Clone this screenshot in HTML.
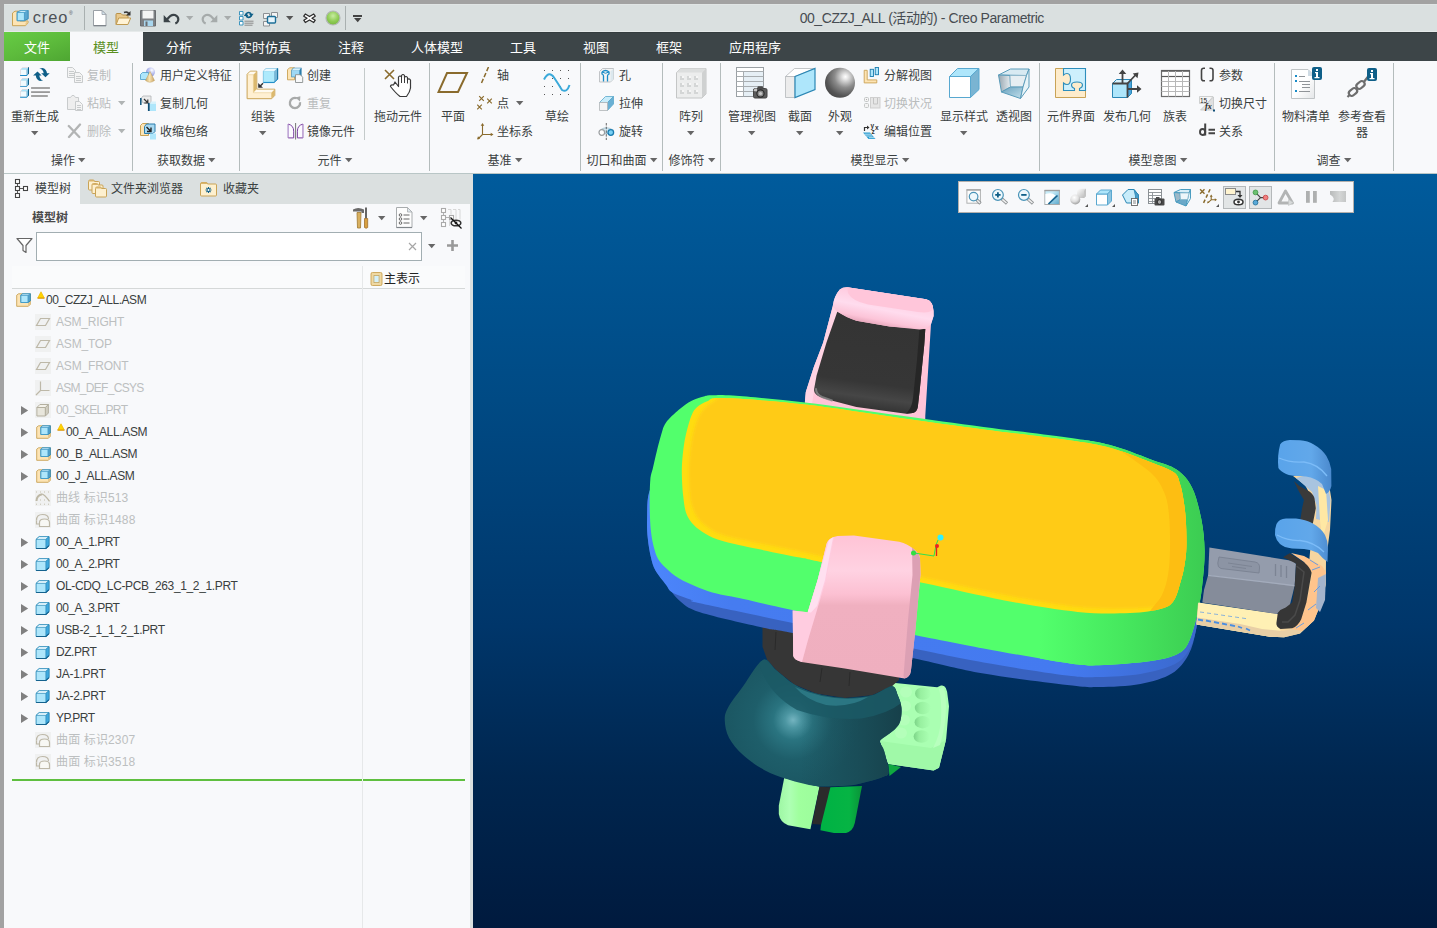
<!DOCTYPE html>
<html lang="zh-CN"><head><meta charset="utf-8"><title>00_CZZJ_ALL (活动的) - Creo Parametric</title>
<style>
html,body{margin:0;padding:0}
body{width:1437px;height:928px;overflow:hidden;background:#a2a2a2;position:relative;font-family:"Liberation Sans","Noto Sans CJK SC",sans-serif;font-size:12px;color:#3a4040}
div,span,svg{position:absolute;box-sizing:border-box}
.t{white-space:nowrap;height:16px;line-height:16px;font-size:12px}
.c{text-align:center}
.dis{color:#b9bcbd}
.tab{font-size:13px;color:#fff;height:20px;line-height:20px;white-space:nowrap}
.sep{width:1px;background:#b4bcbc}
.tr{white-space:nowrap;height:16px;line-height:16px;font-size:12px;letter-spacing:-0.35px;color:#3a4040}
.trd{color:#bcbfc0}
.arr{width:0;height:0;border-left:4px solid transparent;border-right:4px solid transparent;border-top:4px solid #666}
.exp{width:0;height:0;border-top:4.5px solid transparent;border-bottom:4.5px solid transparent;border-left:6px solid #6b6b6b}
</style></head>
<body>
<div style="left:4px;top:4px;width:1433px;height:28px;background:#dae0e0;"></div>
<div style="left:4px;top:4px;width:1433px;height:1px;background:#e0e5e5;"></div>
<div style="left:4px;top:31px;width:1433px;height:1px;background:#e6eaea;"></div>
<svg style="left:12px;top:9.5px" width="62" height="18" viewBox="0 0 62 18"><path d="M0.500 3L3 1.200H8V11H16V13L13.500 15.700H0.500z" fill="#fde4b4" stroke="#c9a356" stroke-width="1" stroke-linejoin="round"/><path d="M13.500 15.700L16 13V11L13.500 13z" fill="#e6c686"/><path d="M5.200 2.300L9 0.500H16.200V8.800L12.400 10.700H5.200z" fill="#5aa6d0" stroke="#2a86b4" stroke-width="0.900" stroke-linejoin="round"/><path d="M5.200 2.300H12.400V10.700H5.200z" fill="#aee6fb" stroke="#3a96c4" stroke-width="0.800"/><path d="M5.200 2.300L9 0.500H16.200L12.400 2.300z" fill="#dcf5fe" stroke="#3a96c4" stroke-width="0.600"/></svg>
<div style="left:32.7px;top:4.7px;height:24px;line-height:24px;font-size:16.4px;color:#4d5257;letter-spacing:0.95px;white-space:nowrap">creo<span style="position:relative;font-size:5px;top:-8px;left:0.5px">®</span></div>
<div class="sep" style="left:84px;top:6px;height:24px;background:#a9b0b0"></div>
<svg style="left:93px;top:10px" width="14" height="17" viewBox="0 0 14 17"><path d="M0.5 0.5h8.5l4 4v11.5h-12.5z" fill="#fff" stroke="#9aa0a6"/><path d="M9 0.5v4h4z" fill="#d4e4ee" stroke="#9aa0a6" stroke-width="0.8"/><path d="M1 15.5h12" stroke="#80868c" stroke-width="1"/></svg>
<svg style="left:115px;top:9.5px" width="17" height="16" viewBox="0 0 17 16"><path d="M1 14.5V4.5q0-1 1-1h4l1.5 1.5H12q1 0 1 1v2" fill="#e8c88c" stroke="#b89048" stroke-width="1"/><path d="M1.2 14.5l2.5-6.5h12l-2.8 6.5z" fill="#fff3d6" stroke="#c09a50" stroke-width="1"/><path d="M9 2.5q3.5-1.5 5 1.5" fill="none" stroke="#333" stroke-width="1.6"/><path d="M15.5 1v4.5h-4.5z" fill="#333"/></svg>
<svg style="left:140px;top:10px" width="16" height="17" viewBox="0 0 16 17"><path d="M0.5 0.5h15v15.5h-15z" fill="#7d8084" stroke="#6a6d70"/><path d="M2.5 0.5h11v8h-11z" fill="#f4f4f4"/><path d="M4 10.5h9v5.5h-9z" fill="#a9d6ee"/><path d="M5.5 11.5h2v4.5h-2z" fill="#6a6d70"/></svg>
<svg style="left:163px;top:13px" width="17" height="12" viewBox="0 0 17 12"><path d="M4 6.500Q8 0.800 12 2Q15.500 3.500 15.300 6.500Q15 9.500 12.300 10.500" fill="none" stroke="#3b4348" stroke-width="2.200"/><path d="M0.700 2V9.200H7.800z" fill="#3b4348"/></svg>
<svg style="left:185.8px;top:16px" width="8" height="5" viewBox="0 0 8 5"><path d="M0 0h7.400l-3.700 4.300z" fill="#a8acac"/></svg>
<svg style="left:201px;top:13px" width="17" height="12" viewBox="0 0 17 12"><path d="M13 6.500Q9 0.800 5 2Q1.500 3.500 1.700 6.500Q2 9.500 4.700 10.500" fill="none" stroke="#a6abab" stroke-width="2.200"/><path d="M16.300 2V9.200H9.200z" fill="#a6abab"/></svg>
<svg style="left:223.8px;top:16px" width="8" height="5" viewBox="0 0 8 5"><path d="M0 0h7.400l-3.700 4.300z" fill="#a8acac"/></svg>
<svg style="left:239px;top:9.5px" width="17" height="17" viewBox="0 0 17 17"><path d="M0.5 1.5h3.5v3.5h-3.5z" fill="#fff" stroke="#2b8cba" stroke-width="0.9"/><path d="M0.5 6.5h3.5v3.5h-3.5z" fill="#fff" stroke="#2b8cba" stroke-width="0.9"/><path d="M0.5 11.5h3.5v3.5h-3.5z" fill="#fff" stroke="#2b8cba" stroke-width="0.9"/><path d="M5.5 11.2h9M5.5 13.2h9M5.5 15.2h8" stroke="#8a8a8a" stroke-width="1"/><path d="M7.300 4A2.600 2.600 0 0 1 12 4" fill="none" stroke="#0f5f88" stroke-width="1.700"/><path d="M10 3.800h4.600l-2.300 3.200z" fill="#0f5f88"/><path d="M12 5.800A2.600 2.600 0 0 1 7.300 5.800" fill="none" stroke="#0f5f88" stroke-width="1.700"/><path d="M4.800 6h4.600l-2.300-3.200z" fill="#0f5f88"/></svg>
<svg style="left:263px;top:11.5px" width="16" height="15" viewBox="0 0 16 15"><path d="M0.5 1.5h6v5h-6zM8.5 0.5h6v5h-6zM0.5 9.5h6v4.5h-6z" fill="#f4f4f4" stroke="#8d9194"/><rect x="4.5" y="4.5" width="8" height="6.5" rx="1" fill="#e6f4fb" stroke="#1d6f98" stroke-width="1.4"/></svg>
<svg style="left:285.8px;top:16.2px" width="8" height="5" viewBox="0 0 8 5"><path d="M0 0h7.400l-3.700 4.300z" fill="#555"/></svg>
<svg style="left:303px;top:13px" width="13" height="11" viewBox="0 0 13 11"><path d="M2.300 1L6.500 3.500L10.700 1L12.200 3.200L9 5.200L12.200 7.200L10.700 9.500L6.500 7L2.300 9.500L0.800 7.200L4 5.200L0.800 3.200z" fill="#fff" stroke="#2c2c2c" stroke-width="1.300" stroke-linejoin="round"/></svg>
<svg style="left:325px;top:10px" width="16" height="16" viewBox="0 0 16 16"><defs><radialGradient id="gb" cx="0.5" cy="0.35" r="0.65"><stop offset="0" stop-color="#c8eca0"/><stop offset="0.6" stop-color="#8fcc55"/><stop offset="1" stop-color="#78b840"/></radialGradient></defs><circle cx="8" cy="8" r="7" fill="url(#gb)" stroke="#b4b8b8" stroke-width="1.2"/></svg>
<div class="sep" style="left:345px;top:6px;height:24px;background:#a9b0b0"></div>
<div style="left:353px;top:15px;width:9px;height:1.5px;background:#444;"></div>
<svg style="left:353.5px;top:18px" width="8" height="5" viewBox="0 0 8 5"><path d="M0 0h7.400l-3.700 4.300z" fill="#444"/></svg>
<div class="t c" style="left:721.8px;top:8px;width:400px;font-size:14px;letter-spacing:-0.43px;color:#474c52;height:20px;line-height:20px">00_CZZJ_ALL (活动的) - Creo Parametric</div>
<div style="left:4px;top:32px;width:1433px;height:29px;background:#3d4548;"></div>
<div style="left:4px;top:32px;width:1433px;height:1px;background:#353d3f;"></div>
<div style="left:4px;top:32px;width:66px;height:29px;background:linear-gradient(160deg,#66cc44 0%,#5dbb3c 50%,#4ea632 100%);"></div>
<div style="left:70px;top:32px;width:73px;height:29px;background:#f8f9fb;"></div>
<div class="tab c" style="left:-13px;top:38px;width:100px;color:#fff">文件</div>
<div class="tab c" style="left:56px;top:38px;width:100px;color:#5a8f1e">模型</div>
<div class="tab c" style="left:129px;top:38px;width:100px;color:#fff">分析</div>
<div class="tab c" style="left:215px;top:38px;width:100px;color:#fff">实时仿真</div>
<div class="tab c" style="left:301px;top:38px;width:100px;color:#fff">注释</div>
<div class="tab c" style="left:387px;top:38px;width:100px;color:#fff">人体模型</div>
<div class="tab c" style="left:473px;top:38px;width:100px;color:#fff">工具</div>
<div class="tab c" style="left:546px;top:38px;width:100px;color:#fff">视图</div>
<div class="tab c" style="left:619px;top:38px;width:100px;color:#fff">框架</div>
<div class="tab c" style="left:705px;top:38px;width:100px;color:#fff">应用程序</div>
<div style="left:4px;top:61px;width:1433px;height:112px;background:#f8f9fb;"></div>
<div style="left:4px;top:173px;width:1433px;height:1px;background:#b9c6c6;"></div>
<div class="sep" style="left:132px;top:63px;height:108px;background:#b4bcbc"></div>
<div class="sep" style="left:239px;top:63px;height:108px;background:#b4bcbc"></div>
<div class="sep" style="left:429px;top:63px;height:108px;background:#b4bcbc"></div>
<div class="sep" style="left:580px;top:63px;height:108px;background:#b4bcbc"></div>
<div class="sep" style="left:662px;top:63px;height:108px;background:#b4bcbc"></div>
<div class="sep" style="left:720px;top:63px;height:108px;background:#b4bcbc"></div>
<div class="sep" style="left:1039px;top:63px;height:108px;background:#b4bcbc"></div>
<div class="sep" style="left:1274px;top:63px;height:108px;background:#b4bcbc"></div>
<div class="sep" style="left:1393px;top:63px;height:108px;background:#b4bcbc"></div>
<div class="sep" style="left:364px;top:68px;height:72px;background:#c4caca"></div>
<svg style="left:18px;top:66px" width="34" height="34" viewBox="0 0 34 34"><g transform="translate(0,0)"><path d="M2.300 3.800L4.300 1.400H10.600V7.500L8.500 9.500H2.300z" fill="#d8ccd0"/><path d="M2.700 3.800L4.500 1.900H10.500L8.700 3.800z" fill="#a8e4fa"/><path d="M2.800 3.800H8.500V9H2.800z" fill="#f0fbff"/><path d="M8.500 3.800L10 2.300V7.500L8.500 9z" fill="#7fc0e0"/><path d="M10 1.300H11V7.700L10 8.500z" fill="#0f5f88"/><path d="M2.100 9H8.500L10 7.800V8.700L8.700 9.900H2.100z" fill="#1a8ac8"/></g><g transform="translate(0,10.9)"><path d="M2.300 3.800L4.300 1.400H10.600V7.500L8.500 9.500H2.300z" fill="#d8ccd0"/><path d="M2.700 3.800L4.500 1.900H10.500L8.700 3.800z" fill="#a8e4fa"/><path d="M2.800 3.800H8.500V9H2.800z" fill="#f0fbff"/><path d="M8.500 3.800L10 2.300V7.500L8.500 9z" fill="#7fc0e0"/><path d="M10 1.300H11V7.700L10 8.500z" fill="#0f5f88"/><path d="M2.100 9H8.500L10 7.800V8.700L8.700 9.900H2.100z" fill="#1a8ac8"/></g><g transform="translate(0,21.8)"><path d="M2.300 3.800L4.300 1.400H10.600V7.500L8.500 9.500H2.300z" fill="#d8ccd0"/><path d="M2.700 3.800L4.500 1.900H10.500L8.700 3.800z" fill="#a8e4fa"/><path d="M2.800 3.800H8.500V9H2.800z" fill="#f0fbff"/><path d="M8.500 3.800L10 2.300V7.500L8.500 9z" fill="#7fc0e0"/><path d="M10 1.300H11V7.700L10 8.500z" fill="#0f5f88"/><path d="M2.100 9H8.500L10 7.800V8.700L8.700 9.900H2.100z" fill="#1a8ac8"/></g><rect x="13.100" y="21.100" width="18.800" height="1.800" fill="#999"/><rect x="13.100" y="25.200" width="18.800" height="1.800" fill="#999"/><rect x="13.100" y="29.100" width="16.700" height="1.800" fill="#999"/><path d="M19.500 5.600L23.600 9.400H21.300Q21.700 13.500 25.200 14.500L22 15.100Q18.200 13.500 17.800 9.400H15.100z" fill="#0f5f88"/><path d="M27.500 11.200L23.200 7.300H25.700Q25.200 3.400 21.300 2.600L24.800 1.900Q28.600 3 29 7.300H31.700z" fill="#0f5f88"/></svg>
<div class="t c" style="left:-25px;top:109px;width:120px;">重新生成</div>
<svg style="left:31px;top:131px" width="8" height="5" viewBox="0 0 8 5"><path d="M0 0h7.400l-3.700 4.300z" fill="#666"/></svg>
<svg style="left:67px;top:67px" width="17" height="17" viewBox="0 0 17 17"><path d="M0.5 0.5h5l3 3v7h-8z" fill="#f4f4f4" stroke="#c8cbcc" stroke-width="1"/><path d="M2 4.5h5" stroke="#c8cbcc" stroke-width="1"/><path d="M2 6.5h5" stroke="#c8cbcc" stroke-width="1"/><path d="M2 8.5h5" stroke="#c8cbcc" stroke-width="1"/><path d="M7.5 5.5h5l3 3v7h-8z" fill="#f4f4f4" stroke="#c8cbcc" stroke-width="1"/><path d="M9 9.5h5" stroke="#c8cbcc" stroke-width="1"/><path d="M9 11.5h5" stroke="#c8cbcc" stroke-width="1"/><path d="M9 13.5h5" stroke="#c8cbcc" stroke-width="1"/></svg>
<div class="t dis" style="left:87px;top:67.5px;">复制</div>
<svg style="left:67px;top:95px" width="17" height="17" viewBox="0 0 17 17"><path d="M0.500 2.500h3l1.500-2h2l1.500 2h3v12h-11z" fill="#eeeeee" stroke="#c8cbcc"/><path d="M8.5 6.5h4l3 3v6h-7z" fill="#f4f4f4" stroke="#c8cbcc" stroke-width="1"/><path d="M10 10.5h4" stroke="#c8cbcc" stroke-width="1"/><path d="M10 12.5h4" stroke="#c8cbcc" stroke-width="1"/><path d="M10 14.5h4" stroke="#c8cbcc" stroke-width="1"/></svg>
<div class="t dis" style="left:87px;top:95.5px;">粘贴</div>
<svg style="left:118px;top:101px" width="8" height="5" viewBox="0 0 8 5"><path d="M0 0h7.400l-3.700 4.300z" fill="#b0b4b4"/></svg>
<svg style="left:67px;top:123px" width="15" height="16" viewBox="0 0 15 16"><path d="M1.800 3l10.500 11M13 1.500l-11 12.500" stroke="#b2b4b4" stroke-width="2.300" stroke-linecap="round"/></svg>
<div class="t dis" style="left:87px;top:123.5px;">删除</div>
<svg style="left:118px;top:129px" width="8" height="5" viewBox="0 0 8 5"><path d="M0 0h7.400l-3.700 4.300z" fill="#b0b4b4"/></svg>
<div class="t" style="left:51px;top:152.5px;">操作</div>
<svg style="left:78px;top:158px" width="8" height="5" viewBox="0 0 8 5"><path d="M0 0h7.400l-3.700 4.300z" fill="#666"/></svg>
<svg style="left:140px;top:67px" width="17" height="17" viewBox="0 0 17 17"><defs><radialGradient id="gu" cx="0.65" cy="0.3" r="0.8"><stop offset="0" stop-color="#fff"/><stop offset="0.4" stop-color="#c4caf4"/><stop offset="1" stop-color="#8088d0"/></radialGradient><linearGradient id="gc" x1="0" y1="0" x2="1" y2="0"><stop offset="0" stop-color="#c8a868"/><stop offset="0.45" stop-color="#f8e4b4"/><stop offset="1" stop-color="#c8a060"/></linearGradient></defs><circle cx="10.500" cy="5" r="4.500" fill="url(#gu)"/><path d="M0.500 7.500l2-2h6v5l-2 2h-6z" fill="#aee6fb" stroke="#4a9cc8" stroke-width="0.800"/><path d="M10 4.500l4.500 9q-4.500 3.500-9 0z" fill="url(#gc)" stroke="#c0a060" stroke-width="0.500"/></svg>
<div class="t" style="left:160px;top:67.5px;">用户定义特征</div>
<svg style="left:140px;top:95px" width="17" height="17" viewBox="0 0 17 17"><path d="M1 3.500l2-2.500h8v7h-8z" fill="#ececec" stroke="#b0b4b6" stroke-width="0.800"/><path d="M0.800 3v7" stroke="#1a5a80" stroke-width="1.600"/><path d="M4 4l3.500 3.500M7.800 4.500v3.500h-3.500" stroke="#333" stroke-width="1.200" fill="none"/><path d="M9.500 8.500h6.500v7.500h-6.500z" fill="#aee6fb"/><path d="M8.800 8v8" stroke="#0f4f78" stroke-width="1.800"/><path d="M9.500 8.500l2-2h4.500v2z" fill="#d8f2fc"/></svg>
<div class="t" style="left:160px;top:95.5px;">复制几何</div>
<svg style="left:140px;top:123px" width="17" height="17" viewBox="0 0 17 17"><path d="M0.500 2.500l2-2h6v12h-8z" fill="#fde4b4" stroke="#c9a356"/><path d="M4.500 3.500l2-2.500h8.500v7.500l-2 2h-8.500z" fill="#a8d8f0" stroke="#2a7cac"/><path d="M6.500 4l4 4M11 4.500v4h-4" stroke="#222" stroke-width="1.400" fill="none"/><path d="M10 10.500h6v6h-6z" fill="#aee6fb"/></svg>
<div class="t" style="left:160px;top:123.5px;">收缩包络</div>
<div class="t" style="left:157px;top:152.5px;">获取数据</div>
<svg style="left:208px;top:158px" width="8" height="5" viewBox="0 0 8 5"><path d="M0 0h7.400l-3.700 4.300z" fill="#666"/></svg>
<svg style="left:246px;top:68px" width="34" height="34" viewBox="0 0 34 34"><path d="M1.100 6.300L4.200 3.200H10.800V21.200H28.800V27.400L25.700 30.700H1.100z" fill="#fff0d2" stroke="#c9a356" stroke-width="1" stroke-linejoin="round"/><path d="M1.500 6.700L4.400 3.700H10.400L7.400 6.700z" fill="#fffaf0"/><path d="M7.400 6.700L10.400 3.700V21.700L7.400 24.700z" fill="#dcb96e"/><path d="M7.400 24.700L10.400 21.700H28.300L25.300 24.700z" fill="#fffaf0"/><path d="M25.300 24.700L28.300 21.700V27.400L25.300 30.300z" fill="#dcb96e"/><path d="M1.500 6.700H7.400V24.700H25.300" fill="none" stroke="#e8cc90" stroke-width="0.600"/><path d="M17.400 3.200L20.300 0.400H31.800V11.100L28.100 14.600H17.400z" fill="#78b8d8" stroke="#3a9acc" stroke-width="0.800" stroke-linejoin="round"/><path d="M17.400 3.200L20.300 0.400H31L28.100 3.200z" fill="#eaf9ff"/><path d="M17.400 3.200H28.100V14.400H17.400z" fill="#aeeafc"/><path d="M31 0.400H31.800V11.100L31 11.900z" fill="#0f6a98"/><path d="M17.400 14.400H28.100L31.400 11.300" fill="none" stroke="#1a8ac8" stroke-width="1"/><path d="M17 15.200L13.500 18.700" stroke="#333" stroke-width="1.400"/><path d="M12.200 15V19.700H17z" fill="#333"/></svg>
<div class="t c" style="left:203px;top:109px;width:120px;">组装</div>
<svg style="left:259px;top:131px" width="8" height="5" viewBox="0 0 8 5"><path d="M0 0h7.400l-3.700 4.300z" fill="#666"/></svg>
<svg style="left:287px;top:67px" width="17" height="17" viewBox="0 0 17 17"><path d="M0.500 2.800l2-2h5v12h-7z" fill="#fde4b4" stroke="#c9a356" stroke-width="0.900"/><path d="M4.300 3l2-2.300h8.300v7.500l-2 2h-8.300z" fill="#2a7cac"/><path d="M4.800 3.200h7.600v6.500h-7.600z" fill="#9ed8f4"/><path d="M4.800 3.200l1.700-1.900h7.400l-1.500 1.900z" fill="#d8f2fc"/><path d="M8.500 7.700h4.700l2.500 2.500v5.300h-7.200z" fill="#f8f9fa" stroke="#8a8e90" stroke-width="0.900"/></svg>
<div class="t" style="left:307px;top:67.5px;">创建</div>
<svg style="left:287px;top:95px" width="16" height="16" viewBox="0 0 16 16"><path d="M13 7.200A5.100 5.100 0 1 1 9.800 3.300" fill="none" stroke="#a8aaaa" stroke-width="2.300"/><path d="M8.300 2.600L13.400 1.300L13 6.400z" fill="#a8aaaa"/></svg>
<div class="t dis" style="left:307px;top:95.5px;">重复</div>
<svg style="left:287px;top:123px" width="17" height="17" viewBox="0 0 17 17"><path d="M1.200 1.100Q6.700 2.400 6.700 8.200V14.900H1.200zM15.900 1.100Q10.400 2.400 10.400 8.200V14.900H15.900z" fill="#fcfaff" stroke="#7a3fa0" stroke-width="1"/><path d="M1.200 1.500V14.500M15.900 1.500V14.500" stroke="#d0c0e4" stroke-width="1"/><path d="M8.600 0V16.500" stroke="#666" stroke-width="0.900"/></svg>
<div class="t" style="left:307px;top:123.5px;">镜像元件</div>
<svg style="left:382px;top:66px" width="34" height="34" viewBox="0 0 34 34"><path d="M3 4l9 9M12 4l-9 9" stroke="#8a6b2d" stroke-width="1.6"/><path d="M13 16l3.500 4.500V11q1.500-2 3 0v-1.500q1.500-2 3 0v2q1.500-2 3 0v2q1.500-1.500 3 0.500v8q-0.500 4-4 8.500h-6.500q-4-3-9.500-10q0-2 3-1.500z" fill="#fff" stroke="#3a3a3a" stroke-width="1.2" stroke-linejoin="round"/><path d="M19.500 11v6M22.500 11.500v5.500M25.500 13.500v4" stroke="#3a3a3a" stroke-width="1" fill="none"/></svg>
<div class="t c" style="left:338px;top:109px;width:120px;">拖动元件</div>
<div class="t" style="left:317.5px;top:152.5px;">元件</div>
<svg style="left:344.5px;top:158px" width="8" height="5" viewBox="0 0 8 5"><path d="M0 0h7.400l-3.700 4.300z" fill="#666"/></svg>
<svg style="left:437px;top:66px" width="34" height="34" viewBox="0 0 34 34"><path d="M10 7h20l-9 19H1.500z" fill="none" stroke="#8a6b2d" stroke-width="2" stroke-linejoin="miter"/></svg>
<div class="t c" style="left:393px;top:109px;width:120px;">平面</div>
<svg style="left:477px;top:67px" width="17" height="17" viewBox="0 0 17 17"><path d="M11.500 0L4.500 16" stroke="#8a6b2d" stroke-width="1.500" stroke-dasharray="4.500 2"/></svg>
<div class="t" style="left:497px;top:67.5px;">轴</div>
<svg style="left:477px;top:95px" width="17" height="17" viewBox="0 0 17 17"><path d="M2.2 1.2l4.6 4.6M6.8 1.2l-4.6 4.6" stroke="#8a6b2d" stroke-width="1.200"/><path d="M10.2 3.7l4.6 4.6M14.8 3.7l-4.6 4.6" stroke="#8a6b2d" stroke-width="1.200"/><path d="M0.2 9.7l4.6 4.6M4.8 9.7l-4.6 4.6" stroke="#8a6b2d" stroke-width="1.200"/></svg>
<div class="t" style="left:497px;top:95.5px;">点</div>
<svg style="left:516px;top:101px" width="8" height="5" viewBox="0 0 8 5"><path d="M0 0h7.400l-3.700 4.300z" fill="#666"/></svg>
<svg style="left:477px;top:123px" width="17" height="17" viewBox="0 0 17 17"><path d="M5.500 2v9.500h9M5.500 11.500l-4.500 4.500" stroke="#8a6b2d" stroke-width="1.100" fill="none"/><path d="M5.500 0l1.800 2.800h-3.600zM16.500 11.500l-2.800 1.800v-3.600zM0 16.500l1-3.200l2.200 2.200z" fill="#8a6b2d"/></svg>
<div class="t" style="left:497px;top:123.5px;">坐标系</div>
<svg style="left:541px;top:66px" width="34" height="34" viewBox="0 0 34 34"><rect x="3" y="4" width="1" height="1" fill="#555"/><rect x="3" y="12" width="1" height="1" fill="#555"/><rect x="3" y="20" width="1" height="1" fill="#555"/><rect x="3" y="28" width="1" height="1" fill="#555"/><rect x="11" y="4" width="1" height="1" fill="#555"/><rect x="11" y="12" width="1" height="1" fill="#555"/><rect x="11" y="20" width="1" height="1" fill="#555"/><rect x="11" y="28" width="1" height="1" fill="#555"/><rect x="19" y="4" width="1" height="1" fill="#555"/><rect x="19" y="12" width="1" height="1" fill="#555"/><rect x="19" y="20" width="1" height="1" fill="#555"/><rect x="19" y="28" width="1" height="1" fill="#555"/><rect x="27" y="4" width="1" height="1" fill="#555"/><rect x="27" y="12" width="1" height="1" fill="#555"/><rect x="27" y="20" width="1" height="1" fill="#555"/><rect x="27" y="28" width="1" height="1" fill="#555"/><path d="M3 13.500Q8 4 13 11.500T21 24Q26 27 28.500 19" fill="none" stroke="#3aa9da" stroke-width="2"/></svg>
<div class="t c" style="left:497px;top:109px;width:120px;">草绘</div>
<div class="t" style="left:487.5px;top:152.5px;">基准</div>
<svg style="left:514.5px;top:158px" width="8" height="5" viewBox="0 0 8 5"><path d="M0 0h7.400l-3.700 4.300z" fill="#666"/></svg>
<svg style="left:598px;top:67px" width="17" height="17" viewBox="0 0 17 17"><path d="M1.500 4.500l3-3h11v10.500l-3 3h-11z" fill="#f4f4f4" stroke="#b4b8ba" stroke-width="0.800"/><path d="M12.500 4.500l3-3v10.500l-3 3z" fill="#dce8ee"/><path d="M4 5q3.500-3 7 0v2q-1.500 0.500-1.500 2v5.500M4 5v2q1.500 0.500 1.500 2v5.500" fill="none" stroke="#1a8cc8" stroke-width="1.300"/><path d="M4 5q3.500 2.500 7 0" fill="none" stroke="#1a8cc8" stroke-width="1"/></svg>
<div class="t" style="left:619px;top:67.5px;">孔</div>
<svg style="left:598px;top:95px" width="17" height="17" viewBox="0 0 17 17"><path d="M1.500 7.500L7.500 1.500h8l-6 6z" fill="#c8ecfa" stroke="#5aa8cc" stroke-width="0.800"/><path d="M9.500 7.500l6-6v7.500l-6 6.500z" fill="#6ab0d4" stroke="#5aa8cc" stroke-width="0.800"/><path d="M1.500 7.500h8v8h-8z" fill="#f4f4f4" stroke="#b0b4b6" stroke-width="0.800"/></svg>
<div class="t" style="left:619px;top:95.5px;">拉伸</div>
<svg style="left:598px;top:123px" width="17" height="17" viewBox="0 0 17 17"><path d="M3 6.500q5.500-3.500 11 0v4H3z" fill="#d4eaf4" stroke="#98b8c8" stroke-width="0.800"/><circle cx="3.800" cy="9.500" r="2.800" fill="#fff" stroke="#9a9ea0" stroke-width="1.200"/><circle cx="12.800" cy="9.500" r="2.800" fill="#7ad0f4" stroke="#1a7cb0" stroke-width="1.300"/><path d="M8.300 0v17" stroke="#444" stroke-width="0.800" stroke-dasharray="2.500 1.200"/></svg>
<div class="t" style="left:619px;top:123.5px;">旋转</div>
<div class="t" style="left:586.5px;top:152.5px;">切口和曲面</div>
<svg style="left:649.5px;top:158px" width="8" height="5" viewBox="0 0 8 5"><path d="M0 0h7.400l-3.700 4.300z" fill="#666"/></svg>
<svg style="left:675px;top:66px" width="34" height="34" viewBox="0 0 34 34"><path d="M1.500 6.500L5.500 2.500h25.500v25.500l-4 4h-25.500z" fill="#eceded" stroke="#c4c6c6"/><path d="M1.500 6.500L5.500 2.500h25.500l-4 4z" fill="#dcdede"/><path d="M27 6.500l4-4v25.500l-4 4z" fill="#cfd1d1"/><rect x="5" y="10" width="4" height="4" fill="#d4d6d6"/><rect x="7" y="10" width="2" height="2" fill="#f6f6f6"/><rect x="5" y="17" width="4" height="4" fill="#d4d6d6"/><rect x="7" y="17" width="2" height="2" fill="#f6f6f6"/><rect x="5" y="24" width="4" height="4" fill="#d4d6d6"/><rect x="7" y="24" width="2" height="2" fill="#f6f6f6"/><rect x="12" y="10" width="4" height="4" fill="#d4d6d6"/><rect x="14" y="10" width="2" height="2" fill="#f6f6f6"/><rect x="12" y="17" width="4" height="4" fill="#d4d6d6"/><rect x="14" y="17" width="2" height="2" fill="#f6f6f6"/><rect x="12" y="24" width="4" height="4" fill="#d4d6d6"/><rect x="14" y="24" width="2" height="2" fill="#f6f6f6"/><rect x="19" y="10" width="4" height="4" fill="#d4d6d6"/><rect x="21" y="10" width="2" height="2" fill="#f6f6f6"/><rect x="19" y="17" width="4" height="4" fill="#d4d6d6"/><rect x="21" y="17" width="2" height="2" fill="#f6f6f6"/><rect x="19" y="24" width="4" height="4" fill="#d4d6d6"/><rect x="21" y="24" width="2" height="2" fill="#f6f6f6"/></svg>
<div class="t c" style="left:631px;top:109px;width:120px;">阵列</div>
<svg style="left:687px;top:131px" width="8" height="5" viewBox="0 0 8 5"><path d="M0 0h7.400l-3.700 4.300z" fill="#666"/></svg>
<div class="t" style="left:668.5px;top:152.5px;">修饰符</div>
<svg style="left:707.5px;top:158px" width="8" height="5" viewBox="0 0 8 5"><path d="M0 0h7.400l-3.700 4.300z" fill="#666"/></svg>
<svg style="left:735px;top:66px" width="34" height="34" viewBox="0 0 34 34"><rect x="1.500" y="1.500" width="27" height="29" fill="#fff" stroke="#9aa0a4"/><rect x="9" y="6" width="19" height="24" fill="#e6eff5"/><path d="M1.500 5.5h27" stroke="#a8adb0"/><path d="M1.500 10.5h27" stroke="#a8adb0"/><path d="M1.500 15.5h27" stroke="#a8adb0"/><path d="M1.500 20.5h27" stroke="#a8adb0"/><path d="M1.500 25.5h27" stroke="#a8adb0"/><path d="M8.500 5.500v25" stroke="#a8adb0"/><rect x="18.500" y="22.500" width="13.500" height="9.500" rx="1.500" fill="#5c5c5c" stroke="#444"/><path d="M18.500 25l1-2.500h2.500v3z" fill="#c4c4c4"/><rect x="22.500" y="20.300" width="5.500" height="3" rx="1" fill="#4a4a4a"/><circle cx="25.500" cy="27.500" r="3.600" fill="#8c8c8c" stroke="#2c2c2c" stroke-width="1.200"/><circle cx="25.500" cy="27.500" r="1.600" fill="#c8c8c8"/></svg>
<div class="t c" style="left:692px;top:109px;width:120px;">管理视图</div>
<svg style="left:748px;top:131px" width="8" height="5" viewBox="0 0 8 5"><path d="M0 0h7.400l-3.700 4.300z" fill="#666"/></svg>
<svg style="left:784px;top:66px" width="34" height="34" viewBox="0 0 34 34"><path d="M1.500 10.500L10.500 2.500h20.500l-20 8z" fill="#fff" stroke="#b4b8ba" stroke-width="0.8"/><path d="M1.500 10.500h9.500v21h-9.500z" fill="#ececec" stroke="#b4b8ba" stroke-width="0.8"/><path d="M11 10.500L31 2.500v21L11 31.500z" fill="#aee6fb" stroke="#2a86b4" stroke-width="1.2"/></svg>
<div class="t c" style="left:740px;top:109px;width:120px;">截面</div>
<svg style="left:796px;top:131px" width="8" height="5" viewBox="0 0 8 5"><path d="M0 0h7.400l-3.700 4.300z" fill="#666"/></svg>
<svg style="left:824px;top:66px" width="34" height="34" viewBox="0 0 34 34"><defs><radialGradient id="gs" cx="0.68" cy="0.3" r="0.8"><stop offset="0" stop-color="#fff"/><stop offset="0.12" stop-color="#e4e4e4"/><stop offset="0.45" stop-color="#8c8c8c"/><stop offset="0.8" stop-color="#555"/><stop offset="1" stop-color="#484848"/></radialGradient></defs><circle cx="16" cy="16.800" r="15" fill="url(#gs)"/></svg>
<div class="t c" style="left:780px;top:109px;width:120px;">外观</div>
<svg style="left:836px;top:131px" width="8" height="5" viewBox="0 0 8 5"><path d="M0 0h7.400l-3.700 4.300z" fill="#666"/></svg>
<svg style="left:863px;top:67px" width="17" height="17" viewBox="0 0 17 17"><path d="M1.200 3.300h3v9.600h9.600v3h-12.600z" fill="#fde4b4" stroke="#c9a356" stroke-width="0.900"/><rect x="7.200" y="2.300" width="3.300" height="7.200" fill="#aee6fb" stroke="#1a7cb0" stroke-width="0.900"/><rect x="12.200" y="0.500" width="3.300" height="7.200" fill="#aee6fb" stroke="#1a7cb0" stroke-width="0.900"/></svg>
<div class="t" style="left:884px;top:67.5px;">分解视图</div>
<svg style="left:863.8px;top:97px" width="17" height="12" viewBox="0 0 17 12"><rect x="0.500" y="0.500" width="4" height="4" rx="1" fill="#f4f4f4" stroke="#c4c6c6"/><rect x="0.500" y="6.500" width="4" height="4" rx="1" fill="#f4f4f4" stroke="#c4c6c6"/><rect x="2" y="2" width="1" height="1" fill="#b0b0b0"/><rect x="6.500" y="0.500" width="9.500" height="10.500" fill="#e6e6e6" stroke="#cfcfcf"/><path d="M9.500 1v6h4v-6" fill="none" stroke="#c4c4c4"/></svg>
<div class="t dis" style="left:884px;top:95.5px;">切换状况</div>
<svg style="left:863px;top:123px" width="17" height="17" viewBox="0 0 17 17"><path d="M0 9.500h7l5.500 6.500h-7z" fill="#2a9cd0"/><path d="M1.500 11.200h6.500M3 13h6.500M6 14.700h6" stroke="#d8f0fa" stroke-width="0.800"/><path d="M1.500 8v-3.500h3" fill="none" stroke="#333" stroke-width="1.200"/><path d="M4 2.500l2.500 2l-2.500 2z" fill="#333"/><text x="7.500" y="5" font-family="Liberation Sans,sans-serif" font-size="6.500" font-weight="bold" fill="#333">y</text><text x="12" y="7" font-family="Liberation Sans,sans-serif" font-size="6.500" font-weight="bold" fill="#333">x</text><text x="8.500" y="10.500" font-family="Liberation Sans,sans-serif" font-size="6.500" font-weight="bold" fill="#333">z</text></svg>
<div class="t" style="left:884px;top:123.5px;">编辑位置</div>
<svg style="left:948px;top:66px" width="34" height="34" viewBox="0 0 34 34"><path d="M1.500 10.500h21v21h-21z" fill="#fff" stroke="#58a8d0"/><path d="M1.500 10.500L9.500 2.500h21.500l-8.500 8z" fill="#aee6fb" stroke="#58a8d0"/><path d="M22.500 10.500L31 2.500v21l-8.500 8z" fill="#7ab4d2" stroke="#58a8d0"/></svg>
<div class="t c" style="left:904px;top:109px;width:120px;">显示样式</div>
<svg style="left:960px;top:131px" width="8" height="5" viewBox="0 0 8 5"><path d="M0 0h7.400l-3.700 4.300z" fill="#666"/></svg>
<svg style="left:997px;top:66px" width="34" height="34" viewBox="0 0 34 34"><defs><linearGradient id="gp1" x1="0" y1="0" x2="1" y2="0"><stop offset="0" stop-color="#98a6b0"/><stop offset="1" stop-color="#e4ecf0"/></linearGradient><linearGradient id="gp2" x1="0" y1="0" x2="1" y2="1"><stop offset="0" stop-color="#6aa2be"/><stop offset="1" stop-color="#c4e0ec"/></linearGradient></defs><path d="M1.500 9L13.500 3h18.500L29.500 9.500z" fill="#d8eaf2" stroke="#5a9cba"/><path d="M1.500 9l11.500 0.500l0.500 11.500L4.500 26z" fill="url(#gp1)" stroke="#5a9cba"/><path d="M13 9.500h16.500L26 21H13.500z" fill="#e6eef2" stroke="#8ab4c8" stroke-width="0.8"/><path d="M4.500 26l9-5H26l-2.500 11.500z" fill="url(#gp2)" stroke="#5a9cba"/><path d="M29.500 9.500L32 3v18l-8.500 11.500L26 21z" fill="#e8f4f8" stroke="#5a9cba"/></svg>
<div class="t c" style="left:954px;top:109px;width:120px;">透视图</div>
<div class="t" style="left:850.5px;top:152.5px;">模型显示</div>
<svg style="left:901.5px;top:158px" width="8" height="5" viewBox="0 0 8 5"><path d="M0 0h7.400l-3.700 4.300z" fill="#666"/></svg>
<svg style="left:1054px;top:66px" width="34" height="34" viewBox="0 0 34 34"><path d="M1.500 2.500h30v29h-30z" fill="#feeccb" stroke="#c9a356"/><path d="M9.500 2.500h22v22h-6v-2q3-1 3-3.500q0-3-5.500-3t-5.500 3q0 2.500 3 3.500v2h-11v-7.500q1.500 1.500 3.500 1.500q3.500 0 3.500-5.500t-3.500-5.500q-2 0-3.500 1.500z" fill="#cdf0fd" stroke="#2d8ebc" stroke-width="1.1"/></svg>
<div class="t c" style="left:1011px;top:109px;width:120px;">元件界面</div>
<svg style="left:1110.7px;top:66.7px" width="34" height="34" viewBox="0 0 34 34"><path d="M1.500 16.500h15v14h-15z" fill="#aee6fb" stroke="#2a86b4"/><path d="M1.500 16.500L5.500 12.500h15l-4 4z" fill="#d6f2fc" stroke="#2a86b4"/><path d="M16.500 16.500l4-4v14l-4 4z" fill="#4aa4dc" stroke="#2a86b4"/><path d="M11.500 16.500V6M16.500 16.500L25 7.500M16.500 22h11" stroke="#444" stroke-width="1.800" fill="none"/><path d="M1.500 16.500h15v14" stroke="#444" stroke-width="1.800" fill="none"/><path d="M11.500 2.500l3.800 4.500h-7.600zM27.500 5.500l-1 5.800l-4.800-4.800zM30.500 22l-4.500 3.800v-7.600z" fill="#444"/></svg>
<div class="t c" style="left:1067px;top:109px;width:120px;">发布几何</div>
<svg style="left:1160px;top:69px" width="32" height="30" viewBox="0 0 32 30"><rect x="1.500" y="1.500" width="28" height="26" fill="#fff" stroke="#6c6c6c" stroke-width="1.200"/><path d="M1.500 2h28" stroke="#5a5a5a" stroke-width="1.500"/><path d="M1.500 7.500h28" stroke="#5a5a5a" stroke-width="1.200"/><path d="M1.500 12.5h28" stroke="#b8b8b8"/><path d="M1.500 17.5h28" stroke="#b8b8b8"/><path d="M1.500 22.5h28" stroke="#b8b8b8"/><path d="M8.5 2v25.500" stroke="#b8b8b8"/><path d="M15.5 2v25.500" stroke="#b8b8b8"/><path d="M22.5 2v25.500" stroke="#b8b8b8"/></svg>
<div class="t c" style="left:1115px;top:109px;width:120px;">族表</div>
<svg style="left:1199px;top:67px" width="16" height="16" viewBox="0 0 16 16"><path d="M6 1.300H4.800Q2.500 1.300 2.500 3.500V11.500Q2.500 13.800 4.800 13.800H6M10.500 1.300H11.700Q14 1.300 14 3.500V11.500Q14 13.800 11.700 13.800H10.500" fill="none" stroke="#444" stroke-width="1.600"/></svg>
<div class="t" style="left:1219px;top:67.5px;">参数</div>
<svg style="left:1199px;top:95px" width="17" height="17" viewBox="0 0 17 17"><path d="M0.500 1.500h13.500L8 8.500H0.500z" fill="#f6f6f6" stroke="#c4c6c6" stroke-width="0.800"/><path d="M14.500 2v13h-13z" fill="#e0e0e0" stroke="#c4c6c6" stroke-width="0.800"/><text x="1" y="7.500" font-family="Liberation Sans,sans-serif" font-size="6.500" fill="#222">15</text><text x="6" y="13.500" font-family="Liberation Serif,serif" font-size="8" font-style="italic" font-weight="bold" fill="#222">fx</text><rect x="14" y="14.500" width="2" height="2" fill="#0f4f78"/></svg>
<div class="t" style="left:1219px;top:95.5px;">切换尺寸</div>
<svg style="left:1199px;top:123px" width="17" height="14" viewBox="0 0 17 14"><path d="M6.200 0.500v12" stroke="#444" stroke-width="2"/><path d="M6.200 9q0 3-2.600 3t-2.600-3t2.600-3t2.600 3z" fill="none" stroke="#444" stroke-width="1.900"/><path d="M9.500 6.700h6.500M9.500 10.300h6.500" stroke="#444" stroke-width="2.100"/></svg>
<div class="t" style="left:1219px;top:123.5px;">关系</div>
<div class="t" style="left:1128.5px;top:152.5px;">模型意图</div>
<svg style="left:1179.5px;top:158px" width="8" height="5" viewBox="0 0 8 5"><path d="M0 0h7.400l-3.700 4.300z" fill="#666"/></svg>
<svg style="left:1290px;top:66px" width="34" height="34" viewBox="0 0 34 34"><defs><linearGradient id="gd" x1="0" y1="0" x2="1" y2="1"><stop offset="0.5" stop-color="#fff"/><stop offset="1" stop-color="#e4e6e8"/></linearGradient></defs><path d="M1.500 3.500h16.500l6.500 6.500v22.500h-23z" fill="url(#gd)" stroke="#c0c4c6"/><path d="M18 3.500v6.500h6.500z" fill="#cfdbe4"/><rect x="5" y="9" width="2" height="2" fill="#1a8cc8"/><rect x="5" y="14" width="2" height="2" fill="#1a8cc8"/><rect x="5" y="24" width="2" height="2" fill="#1a8cc8"/><path d="M9 10.500h6M9 15.500h11M12 18.500h8M12 21.500h8M9 25.500h11" stroke="#909498" stroke-width="1"/><rect x="22" y="1" width="10" height="13" rx="2" fill="#0f5f88"/><rect x="26" y="3" width="2" height="2" fill="#fff"/><path d="M25 6h3v5h1.500v1.300h-5v-1.300h1.500v-3.700h-1z" fill="#fff"/></svg>
<div class="t c" style="left:1246px;top:109px;width:120px;">物料清单</div>
<svg style="left:1346px;top:66px" width="34" height="34" viewBox="0 0 34 34"><g fill="none" stroke="#6e6e6e" stroke-width="2.200"><rect x="-4.500" y="-2.800" width="9" height="5.600" rx="2.800" transform="translate(7,26) rotate(-40)"/><rect x="-4.500" y="-2.800" width="9" height="5.600" rx="2.800" transform="translate(14.500,19) rotate(-40)"/><path d="M10 23.500l2-2M17.500 16.500l5-6.500M1.500 31l2.500-2.500"/></g><rect x="21" y="2" width="10" height="13" rx="2" fill="#0f5f88"/><rect x="25" y="4" width="2" height="2" fill="#fff"/><path d="M24 7h3v5h1.500v1.300h-5v-1.300h1.500v-3.700h-1z" fill="#fff"/></svg>
<div class="t c" style="left:1302px;top:109px;width:120px;">参考查看</div>
<div class="t c" style="left:1302px;top:125px;width:120px;">器</div>
<div class="t" style="left:1316.5px;top:152.5px;">调查</div>
<svg style="left:1343.5px;top:158px" width="8" height="5" viewBox="0 0 8 5"><path d="M0 0h7.400l-3.700 4.300z" fill="#666"/></svg>
<div style="left:4px;top:174px;width:469px;height:754px;background:#dbe0e0;"></div>
<div style="left:4px;top:174px;width:76px;height:30px;background:#f8f9fb;"></div>
<div style="left:4px;top:204px;width:466px;height:724px;background:#f8f9fb;"></div>
<svg style="left:14px;top:178px" width="16" height="20" viewBox="0 0 16 20"><g fill="#fff" stroke="#444" stroke-width="1.100"><rect x="1.500" y="1.500" width="4" height="4"/><rect x="1.500" y="8.500" width="4" height="4"/><rect x="1.500" y="15.500" width="4" height="4"/><rect x="9.500" y="8.500" width="4" height="4"/></g><path d="M3.500 5.500v3M3.500 12.500v3M5.500 10.500h4" stroke="#444" stroke-width="0.900"/></svg>
<div class="t" style="left:35px;top:180.5px;">模型树</div>
<svg style="left:88px;top:179px" width="20" height="20" viewBox="0 0 20 20"><path d="M0.5 2.5q0-1.500 1.500-1.500h3q1.500 0 1.500 1.500h4q1 0 1 1v6.5q0 1-1 1h-9q-1 0-1-1z" fill="#fdf0cf" stroke="#c9a356" stroke-width="1"/><path d="M0.5 2.5q0-1.500 1.500-1.500h3q1.500 0 1.500 1.500z" fill="#d9b46a"/><path d="M4 6q0-1.500 1.500-1.500h3q1.500 0 1.500 1.500h4q1 0 1 1v6.5q0 1-1 1h-9q-1 0-1-1z" fill="#fdf0cf" stroke="#c9a356" stroke-width="1"/><path d="M4 6q0-1.500 1.500-1.500h3q1.500 0 1.500 1.500z" fill="#d9b46a"/><path d="M7.5 9.5q0-1.500 1.500-1.500h3q1.500 0 1.500 1.500h4q1 0 1 1v6.5q0 1-1 1h-9q-1 0-1-1z" fill="#fdf0cf" stroke="#c9a356" stroke-width="1"/><path d="M7.5 9.5q0-1.500 1.500-1.500h3q1.500 0 1.500 1.500z" fill="#d9b46a"/></svg>
<div class="t" style="left:111px;top:180.5px;">文件夹浏览器</div>
<svg style="left:200px;top:181px" width="18" height="16" viewBox="0 0 18 16"><path d="M0.500 3q0-1.500 1.500-1.500h4q1.500 0 1.500 1.500h8q1 0 1 1v10q0 1-1 1h-14q-1 0-1-1z" fill="#fdf0cf" stroke="#c9a356"/><path d="M0.500 3q0-1.500 1.500-1.500h4q1.500 0 1.500 1.500z" fill="#d9b46a"/><path d="M8.500 6v6M5.500 9h6M6.400 6.900l4.200 4.200M10.600 6.900l-4.200 4.200" stroke="#0f5f88" stroke-width="1.100"/><circle cx="8.500" cy="9" r="1" fill="#fff"/></svg>
<div class="t" style="left:223px;top:180.5px;">收藏夹</div>
<div class="t" style="left:32px;top:209.5px;font-weight:bold;color:#4a4a4a">模型树</div>
<svg style="left:351px;top:206px" width="20" height="24" viewBox="0 0 20 24"><path d="M2 3.500q5-3 11 0v3.500h-2.500v-1.500h-8.500z" fill="#6a6a6a"/><path d="M6 6.500h4l-0.500 15.500h-3z" fill="#d8b060" stroke="#a07830" stroke-width="0.800"/><path d="M15 1.500v11" stroke="#555" stroke-width="1.800"/><path d="M13.500 12.500h3.200v9q-1.600 1.500-3.200 0z" fill="#d8a040" stroke="#a07030" stroke-width="0.800"/></svg>
<svg style="left:378px;top:216px" width="8" height="5" viewBox="0 0 8 5"><path d="M0 0h7.400l-3.700 4.300z" fill="#666"/></svg>
<svg style="left:396px;top:207px" width="18" height="22" viewBox="0 0 18 22"><path d="M0.500 0.500h11l4.500 4.500v15.500h-15.500z" fill="#fdfdfd" stroke="#a8acae"/><path d="M11.500 0.500v4.500h4.500z" fill="#dfe8ee" stroke="#a8acae" stroke-width="0.800"/><path d="M0.500 20.500h15.500" stroke="#80868a" stroke-width="1.200"/><g fill="none" stroke="#666" stroke-width="1"><circle cx="4.500" cy="8" r="1.300"/><circle cx="4.500" cy="12" r="1.300"/><circle cx="4.500" cy="16" r="1.300"/><path d="M7.500 8h6M7.500 12h6M7.500 16h6"/></g></svg>
<svg style="left:420px;top:216px" width="8" height="5" viewBox="0 0 8 5"><path d="M0 0h7.400l-3.700 4.300z" fill="#666"/></svg>
<svg style="left:440px;top:207px" width="24" height="24" viewBox="0 0 24 24"><g fill="#fff" stroke="#aaa" stroke-width="1.100"><rect x="1.500" y="1.500" width="4" height="4"/><rect x="1.500" y="8.500" width="4" height="4"/><rect x="1.500" y="15.500" width="4" height="4"/><rect x="9.500" y="8.500" width="4" height="4"/></g><path d="M3.500 5.500v3M3.500 12.500v3M5.500 10.500h4" stroke="#aaa" stroke-width="0.900"/><path d="M8 2.500h3v5M13 2.500h3v14M18 2.500h2v10M9.500 13v6" stroke="#d4d4d4" stroke-width="0.900" fill="none"/><ellipse cx="16" cy="16" rx="4.800" ry="2.800" fill="#fff" stroke="#333" stroke-width="1.600"/><circle cx="16" cy="16" r="1.400" fill="#333"/><path d="M10.500 10.500l11 11" stroke="#111" stroke-width="1.200"/></svg>
<svg style="left:16px;top:237px" width="17" height="17" viewBox="0 0 17 17"><path d="M1 1.500h15l-6 7v7l-3-2v-5z" fill="#fff" stroke="#666" stroke-width="1.200" stroke-linejoin="round"/></svg>
<div style="left:36px;top:232px;width:386px;height:29px;background:#fff;border:1px solid #a2aeb2"></div>
<svg style="left:407.5px;top:242px" width="9" height="9" viewBox="0 0 9 9"><path d="M1 1L8 8M8 1L1 8" stroke="#a6a6a6" stroke-width="1.2" fill="none"/></svg>
<svg style="left:427.5px;top:244px" width="8" height="5" viewBox="0 0 8 5"><path d="M0 0h7.400l-3.700 4.300z" fill="#666"/></svg>
<svg style="left:446px;top:239px" width="13" height="13" viewBox="0 0 13 13"><path d="M6.5 1V12M1 6.5H12" stroke="#999" stroke-width="2.6" fill="none"/></svg>
<div style="left:12px;top:266px;width:453px;height:22px;background:#fafbfc;"></div>
<div style="left:12px;top:288px;width:453px;height:1px;background:#d5d8d8;"></div>
<div style="left:362px;top:266px;width:1px;height:662px;background:#e6e8e9;"></div>
<svg style="left:369.5px;top:272px" width="14" height="14" viewBox="0 0 14 14"><rect x="2.200" y="1.700" width="8.600" height="10.600" fill="#d4f0fa" stroke="#f0d8a0" stroke-width="2.400"/><rect x="1" y="0.500" width="11" height="13" rx="1.500" fill="none" stroke="#c9a356" stroke-width="0.900"/><rect x="3.900" y="3.400" width="5.200" height="7.200" fill="none" stroke="#c9a356" stroke-width="0.800"/></svg>
<div class="t" style="left:384px;top:271px;color:#222">主表示</div>
<svg style="left:16px;top:292.2px" width="16" height="16" viewBox="0 0 16 16"><path d="M0.700 3.200L2.500 1.800H14.300V12.500L12 14.300H0.700z" fill="#fde4b4" stroke="#c9a356" stroke-width="0.900" stroke-linejoin="round"/><path d="M12 14.300L14.300 12.500V9.500L12 11z" fill="#e8c88c"/><path d="M4.900 3.200L6.700 1.800H14.300V9L12 10.500H4.900z" fill="#5aa4cc" stroke="#2a86b4" stroke-width="0.900" stroke-linejoin="round"/><path d="M4.900 3.200H12V10.500H4.900z" fill="#aee6fb" stroke="#3a96c4" stroke-width="0.800"/><path d="M4.900 3.200L6.700 1.800H14.300L12 3.200z" fill="#d4f2fd" stroke="#3a96c4" stroke-width="0.600"/></svg>
<svg style="left:37px;top:290.5px" width="9" height="9" viewBox="0 0 9 9"><path d="M4 0.800l3.300 6.200h-6.600z" fill="#ffd600" stroke="#f0b400" stroke-width="0.700" stroke-linejoin="round"/><path d="M0.500 7.200h7" stroke="#d88c00" stroke-width="0.900"/></svg>
<div class="tr" style="left:46px;top:291.5px;letter-spacing:-0.43px">00_CZZJ_ALL.ASM</div>
<svg style="left:35px;top:313.5px" width="16" height="16" viewBox="0 0 16 16"><rect x="0" y="0" width="16" height="16" fill="#f0f1f1"/><path d="M5.500 4.500h9l-4 7h-9z" fill="none" stroke="#bdb8a8" stroke-width="1.200"/></svg>
<div class="tr trd" style="left:56px;top:313.5px;letter-spacing:-0.21px">ASM_RIGHT</div>
<svg style="left:35px;top:335.5px" width="16" height="16" viewBox="0 0 16 16"><rect x="0" y="0" width="16" height="16" fill="#f0f1f1"/><path d="M5.500 4.500h9l-4 7h-9z" fill="none" stroke="#bdb8a8" stroke-width="1.200"/></svg>
<div class="tr trd" style="left:56px;top:335.5px;letter-spacing:-0.19px">ASM_TOP</div>
<svg style="left:35px;top:357.5px" width="16" height="16" viewBox="0 0 16 16"><rect x="0" y="0" width="16" height="16" fill="#f0f1f1"/><path d="M5.500 4.500h9l-4 7h-9z" fill="none" stroke="#bdb8a8" stroke-width="1.200"/></svg>
<div class="tr trd" style="left:56px;top:357.5px;letter-spacing:-0.17px">ASM_FRONT</div>
<svg style="left:35px;top:379.5px" width="16" height="16" viewBox="0 0 16 16"><rect x="0" y="0" width="16" height="16" fill="#f0f1f1"/><path d="M5.500 1.500v9h9M5.500 10.500l-4.500 4.500" fill="none" stroke="#bdb8a8" stroke-width="1.200"/></svg>
<div class="tr trd" style="left:56px;top:379.5px;letter-spacing:-0.71px">ASM_DEF_CSYS</div>
<svg style="left:21px;top:406px" width="8" height="9" viewBox="0 0 8 9"><path d="M0 0L7.200 4.500L0 9z" fill="#808080"/></svg>
<svg style="left:35px;top:401.5px" width="16" height="16" viewBox="0 0 16 16"><rect x="0" y="0" width="16" height="16" fill="#f0f1f1"/><path d="M1.9 5.5h8.5v8.5h-8.5z" fill="#e8e6dc" stroke="#b4b0a0" stroke-width="1" stroke-linejoin="round"/><path d="M1.9 5.5l3 -3h8.5l-3 3z" fill="#f4f2ea" stroke="#b4b0a0" stroke-width="1" stroke-linejoin="round"/><path d="M10.4 5.5l3 -3v8.5l-3 3z" fill="#d0cdc0" stroke="#b4b0a0" stroke-width="1" stroke-linejoin="round"/></svg>
<div class="tr trd" style="left:56px;top:401.5px;letter-spacing:-0.58px">00_SKEL.PRT</div>
<svg style="left:21px;top:428px" width="8" height="9" viewBox="0 0 8 9"><path d="M0 0L7.200 4.500L0 9z" fill="#808080"/></svg>
<svg style="left:35.5px;top:424.2px" width="16" height="16" viewBox="0 0 16 16"><path d="M0.700 3.200L2.500 1.800H14.300V12.500L12 14.300H0.700z" fill="#fde4b4" stroke="#c9a356" stroke-width="0.900" stroke-linejoin="round"/><path d="M12 14.300L14.300 12.500V9.500L12 11z" fill="#e8c88c"/><path d="M4.900 3.200L6.700 1.800H14.300V9L12 10.500H4.900z" fill="#5aa4cc" stroke="#2a86b4" stroke-width="0.900" stroke-linejoin="round"/><path d="M4.900 3.200H12V10.500H4.900z" fill="#aee6fb" stroke="#3a96c4" stroke-width="0.800"/><path d="M4.900 3.200L6.700 1.800H14.300L12 3.200z" fill="#d4f2fd" stroke="#3a96c4" stroke-width="0.600"/></svg>
<svg style="left:56.5px;top:422.5px" width="9" height="9" viewBox="0 0 9 9"><path d="M4 0.800l3.300 6.200h-6.600z" fill="#ffd600" stroke="#f0b400" stroke-width="0.700" stroke-linejoin="round"/><path d="M0.500 7.200h7" stroke="#d88c00" stroke-width="0.900"/></svg>
<div class="tr" style="left:66px;top:423.5px;letter-spacing:-0.35px">00_A_ALL.ASM</div>
<svg style="left:21px;top:450px" width="8" height="9" viewBox="0 0 8 9"><path d="M0 0L7.200 4.500L0 9z" fill="#808080"/></svg>
<svg style="left:35.5px;top:446.2px" width="16" height="16" viewBox="0 0 16 16"><path d="M0.700 3.200L2.500 1.800H14.300V12.500L12 14.300H0.700z" fill="#fde4b4" stroke="#c9a356" stroke-width="0.900" stroke-linejoin="round"/><path d="M12 14.300L14.300 12.500V9.500L12 11z" fill="#e8c88c"/><path d="M4.900 3.200L6.700 1.800H14.300V9L12 10.500H4.900z" fill="#5aa4cc" stroke="#2a86b4" stroke-width="0.900" stroke-linejoin="round"/><path d="M4.900 3.200H12V10.500H4.900z" fill="#aee6fb" stroke="#3a96c4" stroke-width="0.800"/><path d="M4.900 3.200L6.700 1.800H14.300L12 3.200z" fill="#d4f2fd" stroke="#3a96c4" stroke-width="0.600"/></svg>
<div class="tr" style="left:56px;top:445.5px;letter-spacing:-0.35px">00_B_ALL.ASM</div>
<svg style="left:21px;top:472px" width="8" height="9" viewBox="0 0 8 9"><path d="M0 0L7.200 4.500L0 9z" fill="#808080"/></svg>
<svg style="left:35.5px;top:468.2px" width="16" height="16" viewBox="0 0 16 16"><path d="M0.700 3.200L2.500 1.800H14.300V12.500L12 14.300H0.700z" fill="#fde4b4" stroke="#c9a356" stroke-width="0.900" stroke-linejoin="round"/><path d="M12 14.300L14.300 12.500V9.500L12 11z" fill="#e8c88c"/><path d="M4.900 3.200L6.700 1.800H14.300V9L12 10.500H4.900z" fill="#5aa4cc" stroke="#2a86b4" stroke-width="0.900" stroke-linejoin="round"/><path d="M4.900 3.200H12V10.500H4.900z" fill="#aee6fb" stroke="#3a96c4" stroke-width="0.800"/><path d="M4.900 3.200L6.700 1.800H14.300L12 3.200z" fill="#d4f2fd" stroke="#3a96c4" stroke-width="0.600"/></svg>
<div class="tr" style="left:56px;top:467.5px;letter-spacing:-0.42px">00_J_ALL.ASM</div>
<svg style="left:35px;top:489.5px" width="16" height="16" viewBox="0 0 16 16"><rect x="0" y="0" width="16" height="16" fill="#f0f1f1"/><rect x="1" y="1.5" width="1" height="1" fill="#c4bfae"/><rect x="1" y="9.5" width="1" height="1" fill="#c4bfae"/><rect x="1" y="13.7" width="1" height="1" fill="#c4bfae"/><rect x="5" y="1.5" width="1" height="1" fill="#c4bfae"/><rect x="5" y="9.5" width="1" height="1" fill="#c4bfae"/><rect x="5" y="13.7" width="1" height="1" fill="#c4bfae"/><rect x="9" y="1.5" width="1" height="1" fill="#c4bfae"/><rect x="9" y="9.5" width="1" height="1" fill="#c4bfae"/><rect x="9" y="13.7" width="1" height="1" fill="#c4bfae"/><rect x="13" y="1.5" width="1" height="1" fill="#c4bfae"/><rect x="13" y="9.5" width="1" height="1" fill="#c4bfae"/><rect x="13" y="13.7" width="1" height="1" fill="#c4bfae"/><path d="M1.500 11Q1.500 5.500 7 4.200" fill="none" stroke="#bdb8a6" stroke-width="2"/><path d="M7 4.200Q9 4 14.500 11.300" fill="none" stroke="#bdb8a6" stroke-width="1.300"/></svg>
<div class="tr trd" style="left:56px;top:489.5px;letter-spacing:0.11px">曲线 标识513</div>
<svg style="left:35px;top:511.5px" width="16" height="16" viewBox="0 0 16 16"><rect x="0" y="0" width="16" height="16" fill="#f0f1f1"/><path d="M1.500 8.500q0-6 6-6t6 4.500" fill="none" stroke="#bdb8a8" stroke-width="1.200"/><path d="M4.500 14.500v-4q0-3.500 5-3.500t5 3.500v4z" fill="#f8f8f4" stroke="#bdb8a8" stroke-width="1.200"/><path d="M1.500 8.500v3.500h3" fill="none" stroke="#bdb8a8" stroke-width="1.200"/></svg>
<div class="tr trd" style="left:56px;top:511.5px;letter-spacing:0.17px">曲面 标识1488</div>
<svg style="left:21px;top:538px" width="8" height="9" viewBox="0 0 8 9"><path d="M0 0L7.200 4.500L0 9z" fill="#808080"/></svg>
<svg style="left:35px;top:533.5px" width="16" height="16" viewBox="0 0 16 16"><path d="M1.100 5.400L4.200 2.600H14V11.700L10.900 14.500H1.100z" fill="#aee6fb" stroke="#2a8ab8" stroke-width="0.900" stroke-linejoin="round"/><path d="M1.100 5.400L4.200 2.600H14L10.900 5.400z" fill="#e4f7fe" stroke="#2a8ab8" stroke-width="0.700"/><path d="M10.900 5.400L14 2.600V11.700L10.900 14.500z" fill="#3ea8de" stroke="#2a8ab8" stroke-width="0.700"/><path d="M1.100 14.500H10.900L14 11.700" fill="none" stroke="#15628e" stroke-width="1.100"/></svg>
<div class="tr" style="left:56px;top:533.5px;letter-spacing:-0.51px">00_A_1.PRT</div>
<svg style="left:21px;top:560px" width="8" height="9" viewBox="0 0 8 9"><path d="M0 0L7.200 4.500L0 9z" fill="#808080"/></svg>
<svg style="left:35px;top:555.5px" width="16" height="16" viewBox="0 0 16 16"><path d="M1.100 5.400L4.200 2.600H14V11.700L10.900 14.500H1.100z" fill="#aee6fb" stroke="#2a8ab8" stroke-width="0.900" stroke-linejoin="round"/><path d="M1.100 5.400L4.200 2.600H14L10.900 5.400z" fill="#e4f7fe" stroke="#2a8ab8" stroke-width="0.700"/><path d="M10.900 5.400L14 2.600V11.700L10.900 14.500z" fill="#3ea8de" stroke="#2a8ab8" stroke-width="0.700"/><path d="M1.100 14.500H10.900L14 11.700" fill="none" stroke="#15628e" stroke-width="1.100"/></svg>
<div class="tr" style="left:56px;top:555.5px;letter-spacing:-0.51px">00_A_2.PRT</div>
<svg style="left:21px;top:582px" width="8" height="9" viewBox="0 0 8 9"><path d="M0 0L7.200 4.500L0 9z" fill="#808080"/></svg>
<svg style="left:35px;top:577.5px" width="16" height="16" viewBox="0 0 16 16"><path d="M1.100 5.400L4.200 2.600H14V11.700L10.900 14.500H1.100z" fill="#aee6fb" stroke="#2a8ab8" stroke-width="0.900" stroke-linejoin="round"/><path d="M1.100 5.400L4.200 2.600H14L10.900 5.400z" fill="#e4f7fe" stroke="#2a8ab8" stroke-width="0.700"/><path d="M10.900 5.400L14 2.600V11.700L10.900 14.500z" fill="#3ea8de" stroke="#2a8ab8" stroke-width="0.700"/><path d="M1.100 14.500H10.900L14 11.700" fill="none" stroke="#15628e" stroke-width="1.100"/></svg>
<div class="tr" style="left:56px;top:577.5px;letter-spacing:-0.36px">OL-CDQ_LC-PCB_263_1_2_1.PRT</div>
<svg style="left:21px;top:604px" width="8" height="9" viewBox="0 0 8 9"><path d="M0 0L7.200 4.500L0 9z" fill="#808080"/></svg>
<svg style="left:35px;top:599.5px" width="16" height="16" viewBox="0 0 16 16"><path d="M1.100 5.400L4.200 2.600H14V11.700L10.900 14.500H1.100z" fill="#aee6fb" stroke="#2a8ab8" stroke-width="0.900" stroke-linejoin="round"/><path d="M1.100 5.400L4.200 2.600H14L10.900 5.400z" fill="#e4f7fe" stroke="#2a8ab8" stroke-width="0.700"/><path d="M10.900 5.400L14 2.600V11.700L10.900 14.500z" fill="#3ea8de" stroke="#2a8ab8" stroke-width="0.700"/><path d="M1.100 14.500H10.900L14 11.700" fill="none" stroke="#15628e" stroke-width="1.100"/></svg>
<div class="tr" style="left:56px;top:599.5px;letter-spacing:-0.51px">00_A_3.PRT</div>
<svg style="left:21px;top:626px" width="8" height="9" viewBox="0 0 8 9"><path d="M0 0L7.200 4.500L0 9z" fill="#808080"/></svg>
<svg style="left:35px;top:621.5px" width="16" height="16" viewBox="0 0 16 16"><path d="M1.100 5.400L4.200 2.600H14V11.700L10.900 14.500H1.100z" fill="#aee6fb" stroke="#2a8ab8" stroke-width="0.900" stroke-linejoin="round"/><path d="M1.100 5.400L4.200 2.600H14L10.900 5.400z" fill="#e4f7fe" stroke="#2a8ab8" stroke-width="0.700"/><path d="M10.900 5.400L14 2.600V11.700L10.900 14.500z" fill="#3ea8de" stroke="#2a8ab8" stroke-width="0.700"/><path d="M1.100 14.500H10.900L14 11.700" fill="none" stroke="#15628e" stroke-width="1.100"/></svg>
<div class="tr" style="left:56px;top:621.5px;letter-spacing:-0.43px">USB-2_1_1_2_1.PRT</div>
<svg style="left:21px;top:648px" width="8" height="9" viewBox="0 0 8 9"><path d="M0 0L7.200 4.500L0 9z" fill="#808080"/></svg>
<svg style="left:35px;top:643.5px" width="16" height="16" viewBox="0 0 16 16"><path d="M1.100 5.400L4.200 2.600H14V11.700L10.900 14.500H1.100z" fill="#aee6fb" stroke="#2a8ab8" stroke-width="0.900" stroke-linejoin="round"/><path d="M1.100 5.400L4.200 2.600H14L10.900 5.400z" fill="#e4f7fe" stroke="#2a8ab8" stroke-width="0.700"/><path d="M10.900 5.400L14 2.600V11.700L10.900 14.500z" fill="#3ea8de" stroke="#2a8ab8" stroke-width="0.700"/><path d="M1.100 14.500H10.900L14 11.700" fill="none" stroke="#15628e" stroke-width="1.100"/></svg>
<div class="tr" style="left:56px;top:643.5px;letter-spacing:-0.47px">DZ.PRT</div>
<svg style="left:21px;top:670px" width="8" height="9" viewBox="0 0 8 9"><path d="M0 0L7.200 4.500L0 9z" fill="#808080"/></svg>
<svg style="left:35px;top:665.5px" width="16" height="16" viewBox="0 0 16 16"><path d="M1.100 5.400L4.200 2.600H14V11.700L10.900 14.500H1.100z" fill="#aee6fb" stroke="#2a8ab8" stroke-width="0.900" stroke-linejoin="round"/><path d="M1.100 5.400L4.200 2.600H14L10.900 5.400z" fill="#e4f7fe" stroke="#2a8ab8" stroke-width="0.700"/><path d="M10.900 5.400L14 2.600V11.700L10.900 14.500z" fill="#3ea8de" stroke="#2a8ab8" stroke-width="0.700"/><path d="M1.100 14.500H10.900L14 11.700" fill="none" stroke="#15628e" stroke-width="1.100"/></svg>
<div class="tr" style="left:56px;top:665.5px;letter-spacing:-0.29px">JA-1.PRT</div>
<svg style="left:21px;top:692px" width="8" height="9" viewBox="0 0 8 9"><path d="M0 0L7.200 4.500L0 9z" fill="#808080"/></svg>
<svg style="left:35px;top:687.5px" width="16" height="16" viewBox="0 0 16 16"><path d="M1.100 5.400L4.200 2.600H14V11.700L10.900 14.500H1.100z" fill="#aee6fb" stroke="#2a8ab8" stroke-width="0.900" stroke-linejoin="round"/><path d="M1.100 5.400L4.200 2.600H14L10.900 5.400z" fill="#e4f7fe" stroke="#2a8ab8" stroke-width="0.700"/><path d="M10.900 5.400L14 2.600V11.700L10.900 14.500z" fill="#3ea8de" stroke="#2a8ab8" stroke-width="0.700"/><path d="M1.100 14.500H10.900L14 11.700" fill="none" stroke="#15628e" stroke-width="1.100"/></svg>
<div class="tr" style="left:56px;top:687.5px;letter-spacing:-0.29px">JA-2.PRT</div>
<svg style="left:21px;top:714px" width="8" height="9" viewBox="0 0 8 9"><path d="M0 0L7.200 4.500L0 9z" fill="#808080"/></svg>
<svg style="left:35px;top:709.5px" width="16" height="16" viewBox="0 0 16 16"><path d="M1.100 5.400L4.200 2.600H14V11.700L10.900 14.500H1.100z" fill="#aee6fb" stroke="#2a8ab8" stroke-width="0.900" stroke-linejoin="round"/><path d="M1.100 5.400L4.200 2.600H14L10.900 5.400z" fill="#e4f7fe" stroke="#2a8ab8" stroke-width="0.700"/><path d="M10.900 5.400L14 2.600V11.700L10.900 14.500z" fill="#3ea8de" stroke="#2a8ab8" stroke-width="0.700"/><path d="M1.100 14.500H10.900L14 11.700" fill="none" stroke="#15628e" stroke-width="1.100"/></svg>
<div class="tr" style="left:56px;top:709.5px;letter-spacing:-0.51px">YP.PRT</div>
<svg style="left:35px;top:731.5px" width="16" height="16" viewBox="0 0 16 16"><rect x="0" y="0" width="16" height="16" fill="#f0f1f1"/><path d="M1.500 8.500q0-6 6-6t6 4.500" fill="none" stroke="#bdb8a8" stroke-width="1.200"/><path d="M4.500 14.500v-4q0-3.500 5-3.500t5 3.500v4z" fill="#f8f8f4" stroke="#bdb8a8" stroke-width="1.200"/><path d="M1.500 8.500v3.500h3" fill="none" stroke="#bdb8a8" stroke-width="1.200"/></svg>
<div class="tr trd" style="left:56px;top:731.5px;letter-spacing:0.14px">曲面 标识2307</div>
<svg style="left:35px;top:753.5px" width="16" height="16" viewBox="0 0 16 16"><rect x="0" y="0" width="16" height="16" fill="#f0f1f1"/><path d="M1.500 8.500q0-6 6-6t6 4.500" fill="none" stroke="#bdb8a8" stroke-width="1.200"/><path d="M4.500 14.500v-4q0-3.500 5-3.500t5 3.500v4z" fill="#f8f8f4" stroke="#bdb8a8" stroke-width="1.200"/><path d="M1.500 8.500v3.500h3" fill="none" stroke="#bdb8a8" stroke-width="1.200"/></svg>
<div class="tr trd" style="left:56px;top:753.5px;letter-spacing:0.14px">曲面 标识3518</div>
<div style="left:12px;top:779px;width:453px;height:2px;background:#5fbf3f;"></div>
<div style="left:362px;top:779px;width:1px;height:2px;background:#f4f6f4;"></div>
<div style="left:473px;top:174px;width:964px;height:754px;background:linear-gradient(180deg,#005b9c 0%,#004a84 30%,#00366a 60%,#00264f 80%,#001a3e 100%);overflow:hidden">
<svg style="left:0;top:0" width="964" height="754" viewBox="473 174 964 754">
<defs>
<linearGradient id="gGreen" gradientUnits="userSpaceOnUse" x1="1040" y1="0" x2="1205" y2="0"><stop offset="0" stop-color="#52ff6c"/><stop offset="0.5" stop-color="#46e85e"/><stop offset="1" stop-color="#3ccc52"/></linearGradient>
<linearGradient id="gBlue" gradientUnits="userSpaceOnUse" x1="648" y1="0" x2="1200" y2="0"><stop offset="0" stop-color="#4c86fc"/><stop offset="0.15" stop-color="#467cf0"/><stop offset="0.75" stop-color="#447af0"/><stop offset="1" stop-color="#3a68cc"/></linearGradient>
<linearGradient id="gPinkF" gradientUnits="userSpaceOnUse" x1="0" y1="536" x2="0" y2="675"><stop offset="0" stop-color="#ffc4d6"/><stop offset="0.25" stop-color="#ffd2e2"/><stop offset="0.42" stop-color="#fcc0d2"/><stop offset="0.5" stop-color="#f0b0c0"/><stop offset="1" stop-color="#efafbf"/></linearGradient>
<linearGradient id="gPinkCap" gradientUnits="userSpaceOnUse" x1="884" y1="296" x2="878" y2="326"><stop offset="0" stop-color="#ffcce0"/><stop offset="0.45" stop-color="#ffdcee"/><stop offset="0.8" stop-color="#fcc4d8"/><stop offset="1" stop-color="#e4a4b8"/></linearGradient>
<linearGradient id="gLG" gradientUnits="userSpaceOnUse" x1="780" y1="0" x2="818" y2="0"><stop offset="0" stop-color="#a0f8a6"/><stop offset="0.25" stop-color="#aeffb4"/><stop offset="0.5" stop-color="#a0ff9e"/><stop offset="1" stop-color="#9cfc9c"/></linearGradient>
<linearGradient id="gDG" gradientUnits="userSpaceOnUse" x1="824" y1="0" x2="860" y2="0"><stop offset="0" stop-color="#00b244"/><stop offset="0.7" stop-color="#06b444"/><stop offset="1" stop-color="#0a983a"/></linearGradient>
<linearGradient id="gDim" x1="0" y1="0" x2="1" y2="0"><stop offset="0" stop-color="#7cd488"/><stop offset="0.35" stop-color="#98f0a0"/><stop offset="1" stop-color="#aaffb2"/></linearGradient>
<filter id="fb2" x="-20%" y="-10%" width="140%" height="120%"><feGaussianBlur stdDeviation="1"/></filter>
<filter id="fb" x="-5%" y="-5%" width="110%" height="110%"><feGaussianBlur stdDeviation="1.6"/></filter>
<radialGradient id="gTeal" gradientUnits="userSpaceOnUse" cx="793" cy="720" r="66"><stop offset="0" stop-color="#74b4c0"/><stop offset="0.12" stop-color="#4c96a2"/><stop offset="0.3" stop-color="#2a7480"/><stop offset="0.6" stop-color="#1e5e6a"/><stop offset="1" stop-color="#1b5763"/></radialGradient>
<linearGradient id="gTealShade" gradientUnits="userSpaceOnUse" x1="800" y1="0" x2="900" y2="0"><stop offset="0" stop-color="#1a4a54" stop-opacity="0"/><stop offset="1" stop-color="#163e48" stop-opacity="0.9"/></linearGradient>
<linearGradient id="gPad" gradientUnits="userSpaceOnUse" x1="880" y1="320" x2="868" y2="410"><stop offset="0" stop-color="#343434"/><stop offset="0.7" stop-color="#363636"/><stop offset="0.86" stop-color="#464646"/><stop offset="1" stop-color="#323232"/></linearGradient>
<linearGradient id="gHook" gradientUnits="userSpaceOnUse" x1="1280" y1="0" x2="1332" y2="0"><stop offset="0" stop-color="#5aa4ea"/><stop offset="0.6" stop-color="#62a8ea"/><stop offset="1" stop-color="#4a88cc"/></linearGradient>
</defs>
<path d="M804.9 402L805.8 392Q813 367 823.2 342.4L832.8 306Q834 296 839.8 289.5Q843 287 847.3 287.3L926 299.2Q931.5 301 932.7 306Q934 311 933.6 316L931 324L925.3 415.4L925 440L805 440Z" fill="#ffc4d8"/>
<path d="M832.8 306L823.2 342.4Q813 367 805.8 392L804.9 402L812 404L816.6 375.6L826.5 342.4L837.3 311.7Z" fill="#ffd4e4"/>
<path d="M837.3 311.7Q846 317 856.4 320.8L889.6 326.6L925.3 329Q924.5 345 922.8 359L919.5 392.2L917.8 407Q917 412 912.8 413L906.2 413.8L856.4 407L831.5 400.5Q821 398 817.4 395.5Q813.5 392.500 814.1 388.9L816.6 375.6L826.5 342.4Z" fill="url(#gPad)"/>
<path d="M925.3 329Q924.5 345 922.8 359L919.5 392.2L917.8 407Q917 412 912.8 413L906.2 413.8L909 410Q912 406 913 398L917 360L919.500 329Z" fill="#262626"/>
<path d="M816 389Q816 394 822 397L832 400.500" fill="none" stroke="#8a8a8a" stroke-width="2" stroke-linecap="round" opacity="0.8"/>
<path d="M832.8 306Q834 296 839.8 289.5Q843 287 847.3 287.3L926 299.2Q931.5 301 932.7 306Q934 311 933.6 316L931.1 324.1Q927 329.5 919.5 329.4L889.6 326.6L856.4 320.8Q845 317 838.1 311.7Z" fill="url(#gPinkCap)"/>
<path d="M847.3 287.3L926 299.2Q931.5 301 932.7 306Q933.500 310 930 311.500Q926 313 918 312L868 304.500Q852 301 848 293Z" fill="#ffc6da"/>
<path d="M784.200 778L819.500 786.800L810.400 829.300L788 825.300Q780 822 778.800 814L778.800 805.800Z" fill="url(#gLG)"/>
<path d="M819.500 786.800L830.400 787.300L823.100 824.800L812.300 823.900Z" fill="#2b2b2b"/>
<path d="M830.400 787.300L862 785.900L854.800 823Q853 831 846 833L834 833L820.400 830.200L821 825Z" fill="url(#gDG)"/>
<path d="M892.800 682.700L937.200 687.200L941 685.600Q944.500 685 945.800 688L947.100 691.700L949 706.200L946.200 738.800L939 767.800L933.600 770.500L888.300 764.100L880 741Z" fill="#aaffb2"/>
<path d="M880 741L931 748L946 740L939 767.800L933.600 770.500L888.300 764.100Z" fill="#a0f9a8"/>
<path d="M939 689Q942 700 941 720Q940 735 933 748L940 745Q946 725 946 706Q946 695 943.500 687Z" fill="#b8ffbe"/>
<ellipse cx="923" cy="693.5" rx="8" ry="6.200" fill="url(#gDim)"/>
<ellipse cx="922.8" cy="708" rx="8" ry="6.200" fill="url(#gDim)"/>
<ellipse cx="922.6" cy="722.2" rx="8" ry="6.200" fill="url(#gDim)"/>
<ellipse cx="921.6" cy="736.5" rx="8" ry="6.200" fill="url(#gDim)"/>
<ellipse cx="906" cy="692" rx="6" ry="5.500" fill="#b6ffbc" opacity="0.8"/>
<ellipse cx="905" cy="706" rx="6" ry="5.500" fill="#b6ffbc" opacity="0.8"/>
<ellipse cx="904" cy="720" rx="6" ry="5.500" fill="#b6ffbc" opacity="0.8"/>
<ellipse cx="901" cy="733" rx="6" ry="5.500" fill="#b6ffbc" opacity="0.8"/>
<path d="M888.300 764.100L901 767L889.500 776Z" fill="#10a840"/>
<path d="M762.5 627.0 L900.0 640.0 L899.0 680.0 L891.9 686.3 L872.0 695.3 L844.8 698.0 L815.9 693.5 L794.2 684.5 L776.0 670.0 L767.0 659.4 L762.5 646.7Z" fill="#363636" />
<path d="M776 632L775 650M822 668L820 682M850 672L849 686" stroke="#2a2a2a" stroke-width="1"/>
<path d="M763.0 660.0 C768.5 657.3 770.8 665.9 776.0 670.0 C781.2 674.1 787.6 680.6 794.2 684.5 C800.9 688.4 807.5 691.2 815.9 693.5 C824.3 695.8 835.4 697.7 844.8 698.0 C854.1 698.3 864.2 697.3 872.0 695.3 C879.8 693.3 887.5 686.1 891.8 686.2 C896.1 686.3 896.4 692.4 898.0 696.0 C899.6 699.6 901.1 703.6 901.5 707.7 C901.9 711.8 901.3 717.3 900.4 720.7 C899.5 724.1 897.8 725.9 896.0 728.0 C894.2 730.1 892.3 731.4 889.6 733.6 C886.9 735.8 881.0 738.7 879.9 741.1 C878.8 743.5 882.1 745.7 883.0 748.0 C883.9 750.3 884.4 751.0 885.3 755.1 C886.2 759.2 888.9 768.8 888.5 772.4 C888.1 776.0 886.6 775.2 883.2 776.7 C879.8 778.2 873.4 780.1 868.0 781.5 C862.6 782.9 858.7 784.5 850.8 785.3 C842.9 786.1 828.7 786.7 820.7 786.4 C812.7 786.1 808.8 784.8 803.0 783.5 C797.2 782.2 792.6 781.0 786.2 778.8 C779.8 776.6 771.8 774.2 764.6 770.2 C757.4 766.2 749.0 760.5 743.1 755.1 C737.2 749.7 732.2 743.6 729.1 737.9 C726.0 732.2 725.0 725.7 724.8 720.7 C724.6 715.7 725.0 713.5 728.0 707.7 C731.0 702.0 737.3 694.2 743.1 686.2 C748.9 678.2 757.5 662.7 763.0 660.0Z" fill="url(#gTeal)"/>
<path d="M763.0 660.0 C768.5 657.3 770.8 665.9 776.0 670.0 C781.2 674.1 787.6 680.6 794.2 684.5 C800.9 688.4 807.5 691.2 815.9 693.5 C824.3 695.8 835.4 697.7 844.8 698.0 C854.1 698.3 864.2 697.3 872.0 695.3 C879.8 693.3 887.5 686.1 891.8 686.2 C896.1 686.3 896.4 692.4 898.0 696.0 C899.6 699.6 901.1 703.6 901.5 707.7 C901.9 711.8 901.3 717.3 900.4 720.7 C899.5 724.1 897.8 725.9 896.0 728.0 C894.2 730.1 892.3 731.4 889.6 733.6 C886.9 735.8 881.0 738.7 879.9 741.1 C878.8 743.5 882.1 745.7 883.0 748.0 C883.9 750.3 884.4 751.0 885.3 755.1 C886.2 759.2 888.9 768.8 888.5 772.4 C888.1 776.0 886.6 775.2 883.2 776.7 C879.8 778.2 873.4 780.1 868.0 781.5 C862.6 782.9 858.7 784.5 850.8 785.3 C842.9 786.1 828.7 786.7 820.7 786.4 C812.7 786.1 808.8 784.8 803.0 783.5 C797.2 782.2 792.6 781.0 786.2 778.8 C779.8 776.6 771.8 774.2 764.6 770.2 C757.4 766.2 749.0 760.5 743.1 755.1 C737.2 749.7 732.2 743.6 729.1 737.9 C726.0 732.2 725.0 725.7 724.8 720.7 C724.6 715.7 725.0 713.5 728.0 707.7 C731.0 702.0 737.3 694.2 743.1 686.2 C748.9 678.2 757.5 662.7 763.0 660.0Z" fill="url(#gTealShade)"/>
<clipPath id="ct"><path d="M763.0 660.0 C768.5 657.3 770.8 665.9 776.0 670.0 C781.2 674.1 787.6 680.6 794.2 684.5 C800.9 688.4 807.5 691.2 815.9 693.5 C824.3 695.8 835.4 697.7 844.8 698.0 C854.1 698.3 864.2 697.3 872.0 695.3 C879.8 693.3 887.5 686.1 891.8 686.2 C896.1 686.3 896.4 692.4 898.0 696.0 C899.6 699.6 901.1 703.6 901.5 707.7 C901.9 711.8 901.3 717.3 900.4 720.7 C899.5 724.1 897.8 725.9 896.0 728.0 C894.2 730.1 892.3 731.4 889.6 733.6 C886.9 735.8 881.0 738.7 879.9 741.1 C878.8 743.5 882.1 745.7 883.0 748.0 C883.9 750.3 884.4 751.0 885.3 755.1 C886.2 759.2 888.9 768.8 888.5 772.4 C888.1 776.0 886.6 775.2 883.2 776.7 C879.8 778.2 873.4 780.1 868.0 781.5 C862.6 782.9 858.7 784.5 850.8 785.3 C842.9 786.1 828.7 786.7 820.7 786.4 C812.7 786.1 808.8 784.8 803.0 783.5 C797.2 782.2 792.6 781.0 786.2 778.8 C779.8 776.6 771.8 774.2 764.6 770.2 C757.4 766.2 749.0 760.5 743.1 755.1 C737.2 749.7 732.2 743.6 729.1 737.9 C726.0 732.2 725.0 725.7 724.8 720.7 C724.6 715.7 725.0 713.5 728.0 707.7 C731.0 702.0 737.3 694.2 743.1 686.2 C748.9 678.2 757.5 662.7 763.0 660.0Z"/></clipPath>
<g clip-path="url(#ct)"><path d="M755 650L776 670Q794 685 816 693.500Q845 699 872 695.300L895 684L905 700Q890 714 861.600 718.500Q829 721 797 710Q772 696 762 672Z" fill="#1b5965" opacity="0.85"/>
<path d="M795 687Q830 703 868 697Q850 708 826 705Q806 700 795 687Z" fill="#2d7a86" opacity="0.9"/></g>
<path d="M700.0 450.0 C773.3 453.3 1018.3 481.7 1100.0 500.0 C1181.7 518.3 1173.5 543.3 1190.0 560.0 C1206.5 576.7 1198.0 588.3 1199.0 600.0 C1200.0 611.7 1197.8 620.9 1196.0 630.0 C1194.2 639.1 1192.5 647.5 1188.5 654.7 C1184.5 662.0 1179.8 668.6 1171.8 673.5 C1163.8 678.4 1152.6 681.7 1140.4 684.0 C1128.2 686.3 1110.8 686.9 1098.6 687.1 C1086.4 687.3 1086.5 687.3 1067.3 685.0 C1048.1 682.7 1009.4 678.0 983.6 673.5 C957.8 669.0 944.1 664.6 912.5 657.9 C880.9 651.2 819.1 638.2 794.2 633.2 C769.4 628.2 779.1 631.2 763.4 627.7 C747.7 624.2 714.1 616.9 700.0 612.3 C685.9 607.7 684.5 604.8 678.8 600.0 C673.1 595.2 669.8 588.4 665.9 583.5 C662.0 578.6 658.0 574.9 655.5 570.6 C653.0 566.3 652.3 563.0 651.0 557.6 C649.7 552.2 648.4 544.7 647.8 538.2 C647.1 531.7 646.9 526.3 647.1 518.8 C647.3 511.3 646.9 499.5 649.0 493.0 C651.1 486.5 651.5 487.2 660.0 480.0 C668.5 472.8 626.7 446.7 700.0 450.0Z" fill="#3862c0" />
<path d="M700.0 450.0 C773.3 453.3 1018.3 481.7 1100.0 500.0 C1181.7 518.3 1173.5 543.3 1190.0 560.0 C1206.5 576.7 1197.8 589.2 1199.0 600.0 C1200.2 610.8 1198.5 617.0 1197.0 625.0 C1195.5 633.0 1193.7 641.5 1190.0 648.0 C1186.3 654.5 1183.3 659.7 1175.0 664.0 C1166.7 668.3 1153.1 671.8 1140.4 674.0 C1127.7 676.2 1110.8 676.8 1098.6 677.0 C1086.4 677.2 1086.5 677.9 1067.3 675.5 C1048.1 673.1 1009.2 667.0 983.6 662.5 C958.0 658.0 945.3 655.1 913.7 648.6 C882.1 642.1 829.8 630.8 794.2 623.2 C758.6 615.7 717.1 607.2 700.0 603.3 C682.9 599.4 696.3 601.8 691.7 600.0 C687.1 598.2 676.6 595.0 672.3 592.5 C668.0 590.0 668.7 588.4 665.9 584.8 C663.1 581.1 658.0 575.1 655.5 570.6 C653.0 566.1 652.3 563.0 651.0 557.6 C649.7 552.2 648.4 544.7 647.8 538.2 C647.1 531.7 646.9 526.3 647.1 518.8 C647.3 511.3 646.9 499.5 649.0 493.0 C651.1 486.5 651.5 487.2 660.0 480.0 C668.5 472.8 626.7 446.7 700.0 450.0Z" fill="url(#gBlue)" />
<path d="M712.4 395.3 C717.1 395.2 717.5 394.3 733.0 395.5 C748.5 396.7 777.4 399.2 805.2 402.5 C833.0 405.8 870.3 411.4 900.0 415.5 C929.7 419.6 955.7 423.3 983.6 427.0 C1011.5 430.7 1046.4 434.5 1067.3 437.5 C1088.2 440.5 1095.1 441.2 1109.0 444.8 C1122.9 448.4 1139.7 455.3 1150.9 459.4 C1162.2 463.5 1169.6 464.8 1176.5 469.5 C1183.4 474.2 1188.0 479.5 1192.1 487.8 C1196.2 496.1 1199.2 508.7 1201.3 519.1 C1203.4 529.5 1204.4 539.9 1204.6 550.3 C1204.8 560.7 1203.6 572.0 1202.6 581.6 C1201.6 591.2 1200.9 598.0 1198.7 607.7 C1196.5 617.4 1193.0 632.3 1189.6 640.0 C1186.1 647.7 1184.5 650.2 1178.0 653.7 C1171.5 657.2 1164.1 659.1 1150.9 661.0 C1137.7 662.9 1112.5 664.9 1098.6 665.2 C1084.7 665.6 1086.5 665.9 1067.3 663.1 C1048.1 660.3 1009.0 653.1 983.6 648.4 C958.2 643.7 946.2 641.2 914.6 634.9 C883.0 628.6 822.7 616.5 794.2 610.5 C765.7 604.5 756.3 601.8 743.5 599.0 C730.7 596.2 725.1 595.7 717.6 593.8 C710.1 591.9 704.7 590.0 698.2 587.4 C691.7 584.8 684.2 581.5 678.8 578.3 C673.4 575.1 669.3 571.2 665.9 568.0 C662.5 564.8 660.0 562.1 658.1 558.9 C656.2 555.7 655.4 553.1 654.2 548.6 C653.0 544.1 651.8 538.8 651.0 531.7 C650.2 524.6 649.8 514.5 649.7 505.9 C649.6 497.3 649.8 486.3 650.3 480.0 C650.8 473.7 651.8 472.8 652.9 468.0 C654.0 463.2 655.4 456.8 656.8 451.2 C658.2 445.6 659.8 439.1 661.3 434.3 C662.8 429.6 663.0 426.8 665.9 422.7 C668.8 418.6 674.5 413.5 678.8 409.8 C683.1 406.1 687.4 403.0 691.7 400.7 C696.0 398.4 701.2 397.1 704.7 396.2 C708.2 395.3 707.7 395.4 712.4 395.3Z" fill="#52ff6c" />
<clipPath id="cg"><path d="M712.4 395.3 C717.1 395.2 717.5 394.3 733.0 395.5 C748.5 396.7 777.4 399.2 805.2 402.5 C833.0 405.8 870.3 411.4 900.0 415.5 C929.7 419.6 955.7 423.3 983.6 427.0 C1011.5 430.7 1046.4 434.5 1067.3 437.5 C1088.2 440.5 1095.1 441.2 1109.0 444.8 C1122.9 448.4 1139.7 455.3 1150.9 459.4 C1162.2 463.5 1169.6 464.8 1176.5 469.5 C1183.4 474.2 1188.0 479.5 1192.1 487.8 C1196.2 496.1 1199.2 508.7 1201.3 519.1 C1203.4 529.5 1204.4 539.9 1204.6 550.3 C1204.8 560.7 1203.6 572.0 1202.6 581.6 C1201.6 591.2 1200.9 598.0 1198.7 607.7 C1196.5 617.4 1193.0 632.3 1189.6 640.0 C1186.1 647.7 1184.5 650.2 1178.0 653.7 C1171.5 657.2 1164.1 659.1 1150.9 661.0 C1137.7 662.9 1112.5 664.9 1098.6 665.2 C1084.7 665.6 1086.5 665.9 1067.3 663.1 C1048.1 660.3 1009.0 653.1 983.6 648.4 C958.2 643.7 946.2 641.2 914.6 634.9 C883.0 628.6 822.7 616.5 794.2 610.5 C765.7 604.5 756.3 601.8 743.5 599.0 C730.7 596.2 725.1 595.7 717.6 593.8 C710.1 591.9 704.7 590.0 698.2 587.4 C691.7 584.8 684.2 581.5 678.8 578.3 C673.4 575.1 669.3 571.2 665.9 568.0 C662.5 564.8 660.0 562.1 658.1 558.9 C656.2 555.7 655.4 553.1 654.2 548.6 C653.0 544.1 651.8 538.8 651.0 531.7 C650.2 524.6 649.8 514.5 649.7 505.9 C649.6 497.3 649.8 486.3 650.3 480.0 C650.8 473.7 651.8 472.8 652.9 468.0 C654.0 463.2 655.4 456.8 656.8 451.2 C658.2 445.6 659.8 439.1 661.3 434.3 C662.8 429.6 663.0 426.8 665.9 422.7 C668.8 418.6 674.5 413.5 678.8 409.8 C683.1 406.1 687.4 403.0 691.7 400.7 C696.0 398.4 701.2 397.1 704.7 396.2 C708.2 395.3 707.7 395.4 712.4 395.3Z"/></clipPath>
<rect x="1040" y="440" width="170" height="240" fill="url(#gGreen)" clip-path="url(#cg)"/>
<path d="M722.8 398.1 C739.1 398.6 775.5 401.2 805.0 404.5 C834.5 407.8 870.2 413.8 900.0 418.0 C929.8 422.2 955.7 425.8 983.6 429.5 C1011.5 433.2 1046.4 437.0 1067.3 440.0 C1088.2 443.0 1095.2 443.8 1109.0 447.5 C1122.8 451.2 1139.2 457.8 1150.0 462.0 C1160.8 466.2 1169.0 468.8 1174.0 472.5 C1179.0 476.2 1178.4 479.4 1180.0 484.0 C1181.6 488.6 1182.5 494.0 1183.5 500.0 C1184.5 506.0 1185.3 512.2 1185.8 520.0 C1186.3 527.8 1186.6 539.5 1186.4 547.0 C1186.2 554.5 1185.4 559.6 1184.5 565.0 C1183.6 570.4 1183.0 573.5 1181.2 579.4 C1179.4 585.3 1177.2 595.5 1173.9 600.4 C1170.6 605.3 1168.6 606.6 1161.3 608.7 C1154.0 610.8 1143.9 612.4 1130.0 612.9 C1116.1 613.4 1098.6 614.0 1077.7 611.9 C1056.8 609.8 1030.6 605.3 1004.5 600.4 C978.4 595.5 951.1 588.9 920.9 582.6 C890.7 576.3 843.2 566.7 823.1 562.5 C803.0 558.3 813.3 560.4 800.0 557.6 C786.7 554.9 757.2 549.0 743.5 546.0 C729.8 543.0 724.5 541.9 717.6 539.5 C710.7 537.1 706.4 534.5 702.1 531.7 C697.8 528.9 694.4 525.9 691.7 522.7 C689.0 519.5 687.3 516.6 685.9 512.3 C684.5 508.0 683.9 502.2 683.3 496.8 C682.6 491.4 682.2 485.4 682.0 480.0 C681.8 474.6 681.7 470.0 682.0 464.1 C682.3 458.2 683.1 450.5 684.0 444.7 C684.9 438.9 685.9 434.2 687.2 429.2 C688.5 424.2 690.1 418.6 691.7 414.9 C693.3 411.2 694.3 409.5 696.9 407.2 C699.5 404.9 703.0 402.8 707.3 401.3 C711.6 399.8 706.5 397.6 722.8 398.1Z" fill="#ffdc10" />
<clipPath id="cy"><path d="M722.8 398.1 C739.1 398.6 775.5 401.2 805.0 404.5 C834.5 407.8 870.2 413.8 900.0 418.0 C929.8 422.2 955.7 425.8 983.6 429.5 C1011.5 433.2 1046.4 437.0 1067.3 440.0 C1088.2 443.0 1095.2 443.8 1109.0 447.5 C1122.8 451.2 1139.2 457.8 1150.0 462.0 C1160.8 466.2 1169.0 468.8 1174.0 472.5 C1179.0 476.2 1178.4 479.4 1180.0 484.0 C1181.6 488.6 1182.5 494.0 1183.5 500.0 C1184.5 506.0 1185.3 512.2 1185.8 520.0 C1186.3 527.8 1186.6 539.5 1186.4 547.0 C1186.2 554.5 1185.4 559.6 1184.5 565.0 C1183.6 570.4 1183.0 573.5 1181.2 579.4 C1179.4 585.3 1177.2 595.5 1173.9 600.4 C1170.6 605.3 1168.6 606.6 1161.3 608.7 C1154.0 610.8 1143.9 612.4 1130.0 612.9 C1116.1 613.4 1098.6 614.0 1077.7 611.9 C1056.8 609.8 1030.6 605.3 1004.5 600.4 C978.4 595.5 951.1 588.9 920.9 582.6 C890.7 576.3 843.2 566.7 823.1 562.5 C803.0 558.3 813.3 560.4 800.0 557.6 C786.7 554.9 757.2 549.0 743.5 546.0 C729.8 543.0 724.5 541.9 717.6 539.5 C710.7 537.1 706.4 534.5 702.1 531.7 C697.8 528.9 694.4 525.9 691.7 522.7 C689.0 519.5 687.3 516.6 685.9 512.3 C684.5 508.0 683.9 502.2 683.3 496.8 C682.6 491.4 682.2 485.4 682.0 480.0 C681.8 474.6 681.7 470.0 682.0 464.1 C682.3 458.2 683.1 450.5 684.0 444.7 C684.9 438.9 685.9 434.2 687.2 429.2 C688.5 424.2 690.1 418.6 691.7 414.9 C693.3 411.2 694.3 409.5 696.9 407.2 C699.5 404.9 703.0 402.8 707.3 401.3 C711.6 399.8 706.5 397.6 722.8 398.1Z"/></clipPath>
<g clip-path="url(#cy)"><path d="M730.0 396.0 C745.3 395.8 776.7 398.0 805.0 401.0 C833.3 404.0 870.2 409.8 900.0 414.0 C929.8 418.2 955.7 422.3 983.6 426.0 C1011.5 429.7 1046.4 433.0 1067.3 436.0 C1088.2 439.0 1094.9 440.3 1109.0 444.0 C1123.1 447.7 1140.5 453.7 1152.0 458.0 C1163.5 462.3 1172.3 465.7 1178.0 470.0 C1183.7 474.3 1184.2 479.0 1186.0 484.0 C1187.8 489.0 1188.2 494.0 1189.0 500.0 C1189.8 506.0 1190.7 512.2 1191.0 520.0 C1191.3 527.8 1191.3 539.5 1191.0 547.0 C1190.7 554.5 1190.0 559.7 1189.0 565.0 C1188.0 570.3 1187.2 573.5 1185.0 579.0 C1182.8 584.5 1180.2 593.5 1176.0 598.0 C1171.8 602.5 1167.7 604.2 1160.0 606.0 C1152.3 607.8 1143.7 608.3 1130.0 608.5 C1116.3 608.7 1098.6 609.2 1077.7 607.0 C1056.8 604.8 1030.6 600.0 1004.5 595.0 C978.4 590.0 951.1 583.4 920.9 577.0 C890.7 570.6 843.2 560.8 823.1 556.5 C803.0 552.2 813.3 554.2 800.0 551.5 C786.7 548.8 756.8 542.9 743.5 540.0 C730.2 537.1 726.2 536.3 720.0 534.0 C713.8 531.7 709.8 528.8 706.0 526.0 C702.2 523.2 699.3 520.3 697.0 517.0 C694.7 513.7 693.2 509.5 692.0 506.0 C690.8 502.5 690.5 500.3 690.0 496.0 C689.5 491.7 689.2 485.3 689.0 480.0 C688.8 474.7 688.7 469.8 689.0 464.0 C689.3 458.2 690.2 450.7 691.0 445.0 C691.8 439.3 692.8 434.7 694.0 430.0 C695.2 425.3 696.8 420.5 698.5 417.0 C700.2 413.5 701.6 411.5 704.0 409.0 C706.4 406.5 708.7 404.2 713.0 402.0 C717.3 399.8 714.7 396.2 730.0 396.0Z" fill="#ffcb12" filter="url(#fb)"/></g>
<g clip-path="url(#cy)"><path d="M1110.0 442.0 C1110.0 439.2 1138.3 450.7 1150.0 455.0 C1161.7 459.3 1173.0 462.8 1180.0 468.0 C1187.0 473.2 1189.7 477.3 1192.0 486.0 C1194.3 494.7 1193.7 509.8 1194.0 520.0 C1194.3 530.2 1194.7 537.2 1194.0 547.0 C1193.3 556.8 1192.3 570.2 1190.0 579.0 C1187.7 587.8 1185.0 594.5 1180.0 600.0 C1175.0 605.5 1165.0 610.0 1160.0 612.0 C1155.0 614.0 1149.7 614.8 1150.0 612.0 C1150.3 609.2 1159.0 601.2 1162.0 595.0 C1165.0 588.8 1166.7 582.5 1168.0 575.0 C1169.3 567.5 1169.8 560.0 1170.0 550.0 C1170.2 540.0 1170.0 524.7 1169.0 515.0 C1168.0 505.3 1167.2 499.2 1164.0 492.0 C1160.8 484.8 1159.0 480.3 1150.0 472.0 C1141.0 463.7 1110.0 444.8 1110.0 442.0Z" fill="#fdbe12" /></g>
<path d="M1293 476L1310 472L1328 478L1331.500 500L1330 530L1326 560L1325.800 585L1319.300 607.600L1314 620.500L1300 633.400L1284.400 637.300L1270 636.700L1196.500 624.400L1198 603L1282 614.500L1300 600L1308 575L1312 530L1313 500L1305 485Z" fill="#f6d6a0"/>
<path d="M1296 478L1312 474L1327 480L1330.500 500L1329 522L1316 519L1316.500 505L1312 492Z" fill="#a8c4e0"/>
<path d="M1318 486L1326 490L1328 520L1322 540L1320 520Z" fill="#ffe8a4"/>
<path d="M1198.500 602.500L1277 614L1277 624L1284 637.300L1270 636.700L1196.500 624.400Z" fill="#fff0b4"/>
<path d="M1197 617.500L1240 624L1262 629L1283 631L1300 627L1312 616L1314 620.500L1300 633.400L1284.400 637.300L1270 636.700L1196.500 624.400Z" fill="#e8cfa6"/>
<path d="M1198 619.500l5 1M1206 620.500l5 1.200M1214 622l5 1.200M1222 623.500l5 1.200M1230 625l5 1.200M1238 626.500l4 1.500M1246 628.500l4 2" stroke="#4a8ee0" stroke-width="1.800"/>
<path d="M1200 612l4 0.500M1207 613l4 0.500M1214 614l4 0.500M1221 615l4 0.600M1228 616l4 0.600M1235 617l4 0.600M1242 618l4 0.600" stroke="#5a9ae8" stroke-width="0.700"/>
<path d="M1291 553L1304 556L1322 566L1326 572L1324.500 588L1319.300 607.600L1314 620.500L1302 631L1292 629L1303 614L1308 596L1312 573L1304 562Z" fill="#ffc48c"/>
<path d="M1318 578L1326 574L1325 600L1320 612L1316 608Z" fill="#a4b4cc"/>
<path d="M1310 560l8 5M1312 570l8-3M1314 592l6-6M1308 610l8-6M1296 628l8-5" stroke="#5a9ae8" stroke-width="0.900"/>
<path d="M1208.100 575.300L1294.700 585.600L1289.600 606.300L1276.600 614L1202.300 602.400L1204 590Z" fill="#858c9a"/>
<path d="M1209.400 547.500L1293.400 561L1296 564L1294.700 586.500L1208.100 575.300Z" fill="#949cac"/>
<path d="M1208.100 575.300L1294.700 585.600" stroke="#a4acbc" stroke-width="1.200"/>
<path d="M1219 557 L1255 562 Q1260 563 1259.500 568 L1259 573 L1221 568.500 Q1217.500 567.500 1217.800 563Z" fill="#8c94a4" stroke="#7c8494" stroke-width="1"/>
<path d="M1228 563l24 3.500M1232 566.500l14 2" stroke="#7a8292" stroke-width="0.900"/>
<path d="M1275.500 564V576M1281 565V577M1286.500 566V578" stroke="#7c8494" stroke-width="1.300"/>
<path d="M1293.800 481L1299.100 485.800L1309.800 491.700Q1314 495 1314.600 498.800L1315.800 508.300L1312.800 523.700L1300.300 520.200L1302.100 508.300L1303.900 500L1299.100 491.700Z" fill="#3a3a3a"/>
<path d="M1289.600 553.300L1303.800 562.300Q1310 567 1311.600 572.700L1306.400 602.400L1301.200 619.200Q1298 626 1292.200 628.300L1280.500 628.900Q1276 627 1276.400 623.100L1277.900 612.800Q1281 609 1285.700 607.600L1292.200 602.400L1294.700 585.600L1296 563.600L1283.100 557.200Z" fill="#363636"/>
<path d="M1296.500 566L1304 572L1300 600L1295 615L1288 622L1282 622" fill="none" stroke="#4a4a4a" stroke-width="1.500"/>
<path d="M1280.200 444.200Q1283 440.500 1289.700 440.100L1300 440.300Q1308 441 1313.400 444.200Q1322 449 1326.400 456.100Q1330 462 1331.200 469.100L1331.400 486Q1330 492 1326 494L1322 484Q1316 478 1306 476.500L1293.200 475.700Q1288 475 1286.100 473.900Q1280 471 1278.400 468Q1277 456 1280.200 444.200Z" fill="url(#gHook)"/>
<path d="M1279 458Q1290 463 1304 462Q1318 464 1327 476" fill="none" stroke="#7cbcf8" stroke-width="1.300"/>
<path d="M1276.500 524Q1279 518.800 1286 518.500L1296 518.500Q1306 519.500 1312 523Q1321 528 1325 535Q1328 541 1328 548L1327.500 562Q1322 558 1318 553Q1311 549.500 1304 549L1292 548.500Q1284 547.500 1280 544Q1276 540 1275 535Q1274.500 529 1276.500 524Z" fill="url(#gHook)"/>
<path d="M1277 535Q1288 541 1300 540.500Q1314 542 1324 552" fill="none" stroke="#7cbcf8" stroke-width="1.300"/>
<path d="M826.700 543.500Q829 537 837.600 535.900L853.900 535.400L899.200 541.700Q908 544 913.700 549Q919 553 920 558L920.500 574.300L915.500 628.600L910.900 671Q910 677 904.600 678.400L844.800 668.500L801.400 662.100Q794 660 793.200 655.800L792.700 610.500L807.700 612.300L817.700 579.800Z" fill="url(#gPinkF)"/>
<path d="M912 547.500Q919 553 920 558L920.500 574.300L915.500 628.600L910.900 671Q910 677 904.600 678.400L903.500 676L908 620L912.500 575Z" fill="#dca0b4"/>
<path d="M826.700 543.500Q829 538.500 834 537L826 580L808 640L802 662Q794 660 793.200 655.800L792.700 610.500L807.700 612.300L817.700 579.800Z" fill="#ffcce0"/>
<path d="M829 540L833 537.500L825 580L817 606L811 612.500L807.700 612.300L817.700 579.800Z" fill="#ffe0f0"/>
<path d="M914 553 L934 556 L936 545 L938 540" stroke="#30e050" stroke-width="1" fill="none"/><path d="M936.5 556 V546" stroke="#e02020" stroke-width="1.3"/><circle cx="913.5" cy="553" r="2.5" fill="#30e040"/><circle cx="937" cy="546" r="2" fill="#f02020"/><circle cx="940.5" cy="537.5" r="3" fill="#30f0ff"/>
</svg>
</div>
<div style="left:958px;top:181px;width:396px;height:32px;background:#f7f8fa;border:1px solid #b4b0ac"></div>
<svg style="left:965px;top:188px" width="18" height="18" viewBox="0 0 18 18"><rect x="1.900" y="1.900" width="13.500" height="13.300" fill="#fdfdfd" stroke="#b0b2b2"/><path d="M1.500 1.900h14.300" stroke="#a4a6a6" stroke-width="1.400"/><path d="M11.6401 11.6401L15.5 15.5" stroke="#8e9294" stroke-width="3.200" stroke-linecap="butt"/><path d="M12.2401 12.2401L15 15" stroke="#f0f0f0" stroke-width="1.500"/><circle cx="8.6" cy="8.6" r="4.3" fill="#eef8fc" stroke="#4a94b8" stroke-width="1.200"/></svg>
<svg style="left:991px;top:188px" width="18" height="18" viewBox="0 0 18 18"><path d="M10.7178 10.7178L16 15.5" stroke="#8e9294" stroke-width="3.200" stroke-linecap="butt"/><path d="M11.3178 11.3178L15.5 15" stroke="#f0f0f0" stroke-width="1.500"/><circle cx="6.9" cy="6.9" r="5.4" fill="#eef8fc" stroke="#4a94b8" stroke-width="1.200"/><path d="M4.200 6.900h5.400M6.900 4.200v5.400" stroke="#0f5f88" stroke-width="1.800"/></svg>
<svg style="left:1017px;top:188px" width="18" height="18" viewBox="0 0 18 18"><path d="M10.7178 10.7178L16 15.5" stroke="#8e9294" stroke-width="3.200" stroke-linecap="butt"/><path d="M11.3178 11.3178L15.5 15" stroke="#f0f0f0" stroke-width="1.500"/><circle cx="6.9" cy="6.9" r="5.4" fill="#eef8fc" stroke="#4a94b8" stroke-width="1.200"/><path d="M4.200 6.900h5.400" stroke="#0f5f88" stroke-width="1.800"/></svg>
<svg style="left:1043px;top:189px" width="18" height="18" viewBox="0 0 18 18"><defs><linearGradient id="grp" x1="0" y1="0" x2="1" y2="1"><stop offset="0.3" stop-color="#c8ecf8"/><stop offset="1" stop-color="#5aa8cc"/></linearGradient></defs><rect x="1.900" y="1.500" width="14.500" height="14" fill="url(#grp)" stroke="#a8aaaa"/><path d="M1.500 1.500h15.300" stroke="#9c9e9e" stroke-width="1.400"/><path d="M2.400 15V5Q9 3 12.500 6.500L4.500 15z" fill="#fff"/><path d="M14.500 6.500l-9 8.500" stroke="#14608c" stroke-width="1.600"/></svg>
<svg style="left:1069px;top:188px" width="20" height="20" viewBox="0 0 20 20"><defs><radialGradient id="gq" cx="0.4" cy="0.3" r="0.8"><stop offset="0" stop-color="#fff"/><stop offset="0.5" stop-color="#e0e0e0"/><stop offset="1" stop-color="#8c8c8c"/></radialGradient><linearGradient id="gq2" x1="0" y1="0" x2="1" y2="1"><stop offset="0" stop-color="#fff"/><stop offset="1" stop-color="#b4b4b4"/></linearGradient></defs><path d="M8 2.500L10 0.800H17V8L15 10H8z" fill="url(#gq2)"/><path d="M15 2.800L17 0.800V8L15 10z" fill="#c4c4c4"/><circle cx="6.300" cy="11.500" r="5" fill="url(#gq)"/><path d="M19 16v3h-3z" fill="#555"/></svg>
<svg style="left:1095px;top:188px" width="20" height="20" viewBox="0 0 20 20"><path d="M1.5 6h11v11h-11z" fill="#fff" stroke="#5aa8d0" stroke-width="1" stroke-linejoin="round"/><path d="M1.5 6l4 -4h11l-4 4z" fill="#aee6fb" stroke="#5aa8d0" stroke-width="1" stroke-linejoin="round"/><path d="M12.5 6l4 -4v11l-4 4z" fill="#8cc4e0" stroke="#5aa8d0" stroke-width="1" stroke-linejoin="round"/><path d="M20 16v3h-3z" fill="#555"/></svg>
<svg style="left:1121px;top:187px" width="20" height="20" viewBox="0 0 20 20"><path d="M1.500 8L7 2.500h6l4.500 5.500v8h-12z" fill="#c8ecfa" stroke="#2a86b4"/><path d="M13 2.500l4.500 5.500v8l-3-2v-5z" fill="#4a9cc8" stroke="#2a86b4" stroke-width="0.800"/><rect x="10.500" y="11.500" width="6" height="7" fill="#fff" stroke="#666" stroke-width="0.900"/><path d="M12 14h3M12 16h3" stroke="#666" stroke-width="0.800"/></svg>
<svg style="left:1148px;top:189px" width="18" height="18" viewBox="0 0 18 18"><rect x="0.500" y="0.500" width="13" height="14" fill="#fff" stroke="#8a9094"/><path d="M0.500 3.5h13" stroke="#8a9094" stroke-width="0.900"/><path d="M0.500 6.5h13" stroke="#8a9094" stroke-width="0.900"/><path d="M0.500 9.5h13" stroke="#8a9094" stroke-width="0.900"/><path d="M0.500 12.5h13" stroke="#8a9094" stroke-width="0.900"/><path d="M4.500 3.500v11" stroke="#8a9094" stroke-width="0.900"/><rect x="6.500" y="9.500" width="10" height="7" rx="1" fill="#4a4a4a"/><rect x="8" y="8" width="3.500" height="2" fill="#4a4a4a"/><circle cx="11.500" cy="13" r="2.300" fill="#aaa" stroke="#222" stroke-width="0.900"/></svg>
<svg style="left:1173px;top:188px" width="20" height="20" viewBox="0 0 20 20"><path d="M1 4.500L7.500 1.500h10L16 5z" fill="#d8eef8" stroke="#4a9cc0"/><path d="M1 4.500L7 5l0.500 6.500L3 14z" fill="#9cb8c8" stroke="#4a9cc0"/><path d="M3 14l4.500-2.500h7l-1.500 6.500z" fill="#6aa8c8" stroke="#4a9cc0"/><path d="M16 5l1.500-3.500v9l-4.500 7.500l1.500-6.500z" fill="#e4f4fa" stroke="#4a9cc0"/><path d="M7 5h9l-1.500 6.500h-7z" fill="#eef6fa" stroke="#8ab8cc" stroke-width="0.700"/></svg>
<svg style="left:1198px;top:188px" width="22" height="20" viewBox="0 0 22 20"><path d="M2.100 1.300l4.400 4.400M6.500 1.300l-4.400 4.400" stroke="#8a6b2d" stroke-width="1.400"/><path d="M12.100 1.200L4.900 16.300" stroke="#8a6b2d" stroke-width="1.500" stroke-dasharray="3.600 2.200"/><path d="M13.200 8v3.800h4.300M13.200 11.800l-3.200 2.800" stroke="#8a6b2d" stroke-width="1.100" fill="none"/><path d="M13.200 6.500l1.500 2.200h-3zM19 11.800l-2.200 1.500v-3zM9 15.500l0.800-2.600l1.600 1.700z" fill="#8a6b2d"/><path d="M21 16v3h-3z" fill="#555"/></svg>
<div style="left:1223px;top:186px;width:23px;height:23px;background:#e2e5e6;border:1px solid #b4b8ba"></div>
<svg style="left:1225px;top:188px" width="20" height="20" viewBox="0 0 20 20"><rect x="0.500" y="0.500" width="10" height="6" fill="#fff4d0" stroke="#8a8a8a"/><path d="M11 3.500h4v4" fill="none" stroke="#333" stroke-width="1.300"/><path d="M12.500 7h5l-2.500 3z" fill="#333"/><ellipse cx="13.500" cy="14" rx="4.500" ry="2.800" fill="#fff" stroke="#333" stroke-width="1.500"/><circle cx="13.500" cy="14" r="1.400" fill="#333"/></svg>
<div style="left:1249px;top:186px;width:23px;height:23px;background:#e2e5e6;border:1px solid #b4b8ba"></div>
<svg style="left:1251px;top:188px" width="20" height="20" viewBox="0 0 20 20"><path d="M9.500 9.600L4.500 4.400M9.500 9.600H14.500M9.500 9.600L4.500 14.600" stroke="#444" stroke-width="1.200"/><circle cx="4.500" cy="4.400" r="2.400" fill="#6cc070" stroke="#3c9844" stroke-width="0.800"/><circle cx="4.500" cy="14.600" r="2.400" fill="#58a8d8" stroke="#1a6c98" stroke-width="0.800"/><circle cx="14.600" cy="9.600" r="2.400" fill="#f08080" stroke="#c84040" stroke-width="0.800"/></svg>
<svg style="left:1276px;top:188px" width="20" height="20" viewBox="0 0 20 20"><path d="M9.500 3L3 15h13.500z" fill="none" stroke="#b2b4b4" stroke-width="2.800" stroke-linejoin="round"/><path d="M9.500 8.500l2 4h-4z" fill="#f4f4f4"/><path d="M12.500 11.500l5 3l-5 3z" fill="#d8dada" stroke="#c0c2c2" stroke-width="0.600"/></svg>
<svg style="left:1306px;top:190.5px" width="12" height="14" viewBox="0 0 12 14"><rect x="0" y="0" width="3.800" height="11.800" fill="#aeb0b0"/><rect x="7" y="0" width="3.800" height="11.800" fill="#aeb0b0"/></svg>
<svg style="left:1329px;top:190px" width="18" height="14" viewBox="0 0 18 14"><defs><linearGradient id="gst" x1="0" y1="0" x2="1" y2="0"><stop offset="0" stop-color="#b8baba"/><stop offset="0.600" stop-color="#d4d6d6"/><stop offset="1" stop-color="#c4c6c6"/></linearGradient></defs><path d="M1 1h16v11h-13.500q3.500-4-2.500-7.500z" fill="url(#gst)"/></svg>
</body></html>
